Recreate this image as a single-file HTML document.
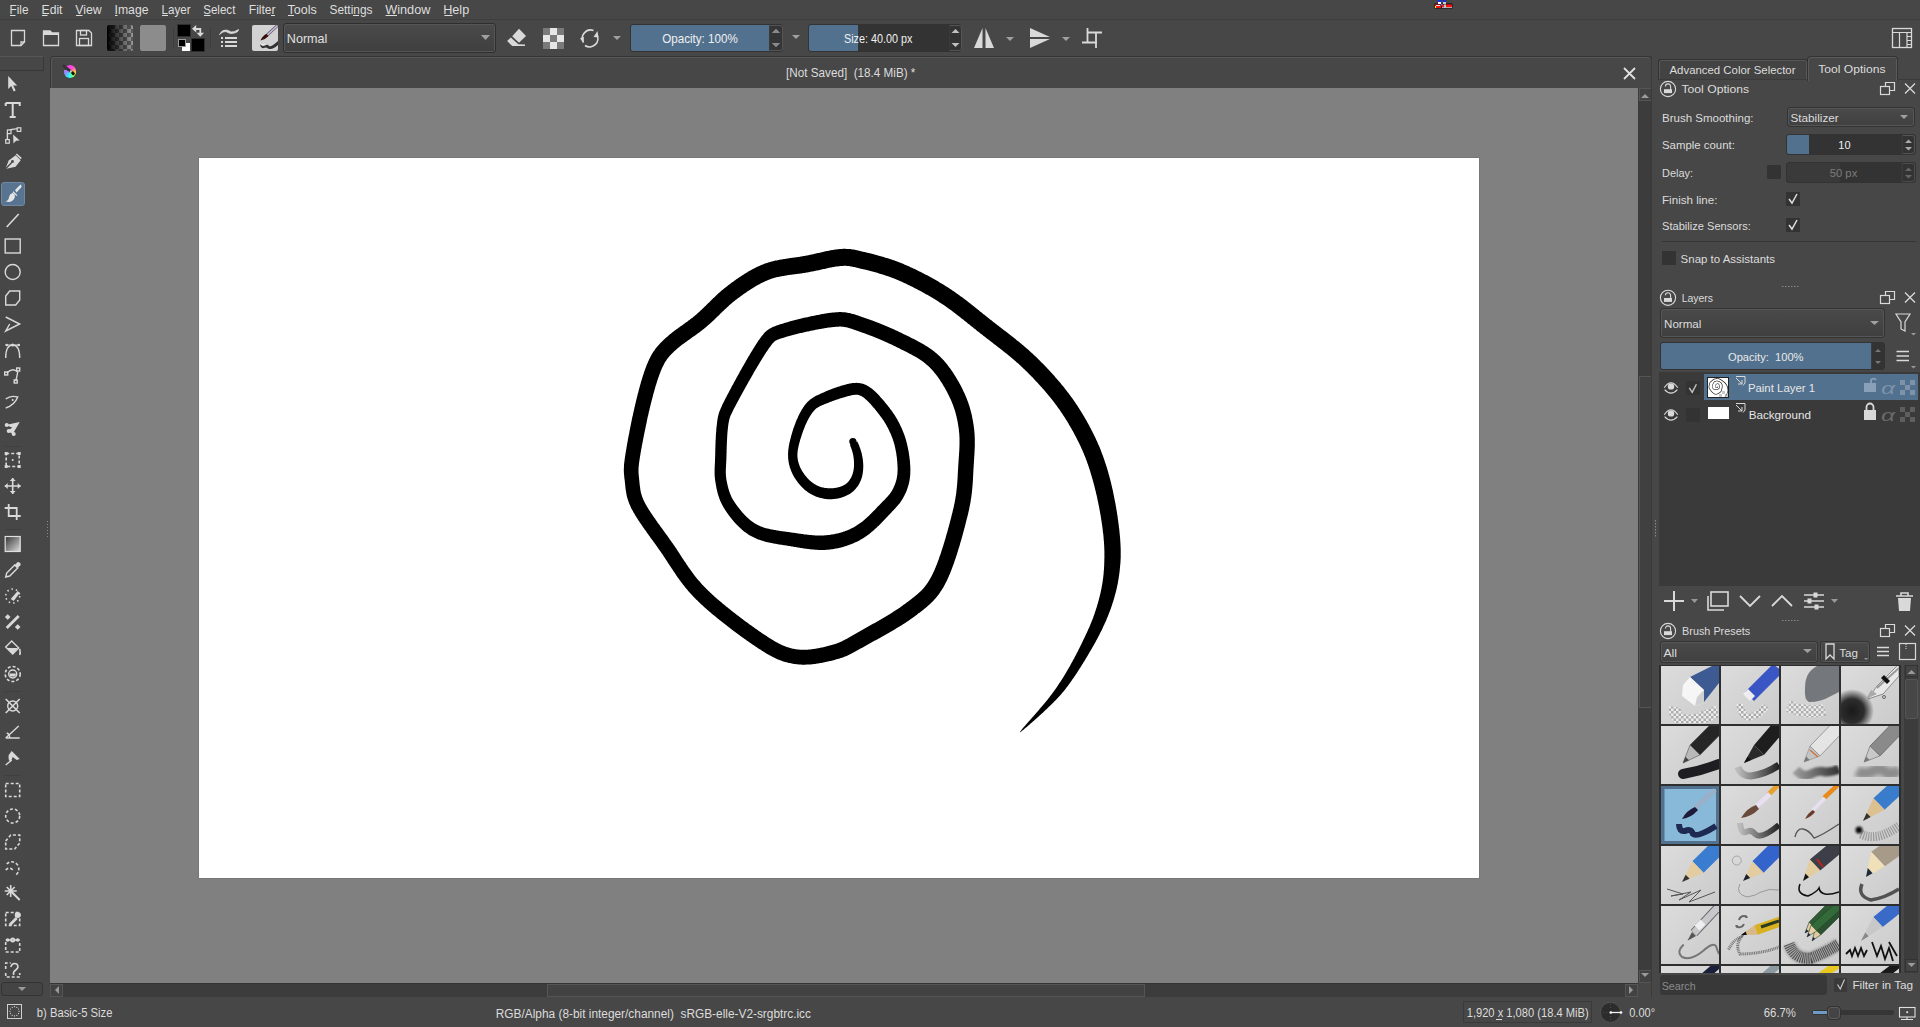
<!DOCTYPE html><html><head><meta charset="utf-8"><style>
*{box-sizing:border-box;margin:0;padding:0}
html,body{width:1920px;height:1027px;overflow:hidden;background:#474747;font-family:"Liberation Sans",sans-serif;font-size:12px;color:#dcdcdc}
.a{position:absolute}
.t{position:absolute;white-space:pre;line-height:14px}
svg{position:absolute;overflow:visible}
</style></head><body>

<div class="a" style="left:0;top:19px;width:1920px;height:1px;background:#3e3e3e"></div>
<svg style="left:0;top:0" width="1500" height="12"><rect x="1434.5" y="3.5" width="7" height="5" fill="#111"/><rect x="1441.5" y="3.5" width="11" height="5" fill="#111"/><rect x="1435" y="4.5" width="6" height="3.5" fill="#ff1010"/><rect x="1436" y="5" width="4" height="1" fill="#dde"/><rect x="1435" y="6" width="1" height="2" fill="#ff0"/><rect x="1442" y="4.5" width="10" height="3.2" fill="#ff1010"/><rect x="1444" y="4.5" width="2" height="3.2" fill="#bcc"/><rect x="1442" y="7" width="10" height="0.8" fill="#bcc"/><rect x="1438" y="2" width="3" height="2" fill="#fff"/><rect x="1443" y="2" width="3" height="2" fill="#ccc"/><rect x="1437.5" y="0" width="4" height="2" fill="#1030e0"/><rect x="1443" y="0" width="3" height="2" fill="#1030d0"/><rect x="1441" y="4" width="1.5" height="1.5" fill="#20a0ff"/></svg>
<svg style="left:0;top:0" width="300" height="60"><path d="M11.5,30.5 H24.5 V42 L21,45.5 H11.5 Z" fill="none" stroke="#d9d9d9" stroke-width="1.3"/><path d="M21,45.5 V42 H24.5" fill="none" stroke="#d9d9d9" stroke-width="1.3"/><path d="M43.5,31 H50 L52,33 H58.5 V45.5 H43.5 Z" fill="none" stroke="#d9d9d9" stroke-width="1.3"/><path d="M43.5,31 H50 L52,33 H58.5 V35 H43.5Z" fill="#d9d9d9"/><path d="M76.5,30.5 H89 L91.5,33 V45.5 H76.5 Z" fill="none" stroke="#d9d9d9" stroke-width="1.3"/><rect x="80.5" y="30.5" width="6" height="4.5" fill="none" stroke="#d9d9d9" stroke-width="1.3"/><rect x="79.5" y="38.5" width="9" height="7" fill="none" stroke="#d9d9d9" stroke-width="1.3"/></svg>
<div class="a" style="left:107px;top:25px;width:26px;height:26px;border-radius:2px;overflow:hidden;background:linear-gradient(90deg,#000 0%,rgba(0,0,0,0.0) 100%),repeating-conic-gradient(#5a5a5a 0 25%,#9a9a9a 0 50%) 0 0/8px 8px"></div>
<div class="a" style="left:140px;top:25px;width:26px;height:26px;border-radius:2px;background:#8c8c8c"></div>
<div class="a" style="left:173px;top:28px;width:1px;height:20px;background:#3d3d3d"></div>
<div class="a" style="left:177px;top:24px;width:14px;height:13px;background:#000;border:1px solid #2e2e2e"></div>
<div class="a" style="left:191px;top:38px;width:14px;height:14px;background:#000;border:1px solid #2e2e2e"></div>
<div class="a" style="left:182px;top:43px;width:8px;height:8px;background:#fff"></div>
<div class="a" style="left:178px;top:39px;width:8px;height:8px;background:#000;border:1px solid #9a9a9a"></div>
<svg style="left:0;top:0" width="300" height="60"><path d="M195,29 H200.3 V33.5" stroke="#d9d9d9" stroke-width="1.8" fill="none"/><path d="M192,28.7 L196.2,25 L196.2,32.4Z M200.3,36.8 L196.5,32.8 L204.1,32.8Z" fill="#d9d9d9"/></svg>
<div class="a" style="left:210px;top:28px;width:1px;height:20px;background:#3d3d3d"></div>
<svg style="left:0;top:0" width="300" height="60"><path d="M219.5,34.5 Q222,29.5 226,30 Q229,30.5 231,32 Q234,32.5 238.5,29.5 Q238.5,33 231,33.5 Q228,33 226,31.5 Q223,31 219.5,34.5Z" fill="#d9d9d9" stroke="#d9d9d9" stroke-width="0.8"/><rect x="221" y="37" width="2" height="2" fill="#d9d9d9"/><rect x="225" y="37" width="12" height="2" fill="#d9d9d9"/><rect x="221" y="41" width="2" height="2" fill="#d9d9d9"/><rect x="225" y="41" width="12" height="2" fill="#d9d9d9"/><rect x="221" y="45" width="2" height="2" fill="#d9d9d9"/><rect x="225" y="45" width="12" height="2" fill="#d9d9d9"/></svg>
<div class="a" style="left:252px;top:25px;width:26px;height:26px;border-radius:2px;background:#d2d2d2;overflow:hidden"><svg style="left:0;top:0" width="26" height="26"><path d="M8,18.5 Q9.5,22 13,20.5 Q16,19 17,21 Q19,22.5 26,16 L26,20 Q20,25.5 16,23.5 Q14,22 12,23 Q8.5,24 8,18.5Z" fill="#333"/><path d="M8,18.5 Q10,21 13,19.5" stroke="#fff" stroke-width="0.8" fill="none"/><path d="M13.5,11.5 L25.5,0.5" stroke="#555" stroke-width="3"/><path d="M13.5,11.5 L25.5,0.5" stroke="#c8b8e0" stroke-width="1.6"/><path d="M8.5,15.5 Q10.5,10.5 14.5,9 L16.5,11 Q13.5,14.5 8.5,15.5Z" fill="#3a0c0c"/></svg></div>
<div class="a" style="left:283px;top:23px;width:213px;height:30px;border:1px solid #2f2f2f;border-radius:3px;background:linear-gradient(#4a4a4a,#3f3f3f);box-shadow:inset 0 0 0 1px #565656"></div>
<svg style="left:0;top:0" width="700" height="60"><path d="M481,35 L490,35 L485.5,40Z" fill="#a0a0a0"/></svg>
<svg style="left:0;top:0" width="700" height="60"><path d="M512.2,36.2 L519,28.8 L526,35.9 L519,42.7Z" fill="#d9d9d9"/><path d="M507.1,41 L510.8,37.6 L518.3,44.3 L525,44.6 L525,46 L512.2,46Z" fill="#d9d9d9"/><rect x="543" y="28" width="21" height="21" fill="#7a7a7a"/><rect x="550" y="28" width="7" height="7" fill="#e6e6e6"/><rect x="543" y="35" width="7" height="7" fill="#e6e6e6"/><rect x="557" y="35" width="7" height="7" fill="#e6e6e6"/><rect x="550" y="42" width="7" height="7" fill="#e6e6e6"/><path d="M583.5,42.5 A8.3,8.3 0 0 1 593.5,30.5" stroke="#d9d9d9" stroke-width="1.7" fill="none"/><path d="M596.5,34 A8.3,8.3 0 0 1 585,45.5" stroke="#d9d9d9" stroke-width="1.7" fill="none"/><path d="M593.5,37 L597.5,31 L598.5,37.5Z M580,38.5 L583.5,42.5 L584,37Z" fill="#d9d9d9"/><path d="M613,36 L621,36 L617,40Z" fill="#a0a0a0"/></svg>
<div class="a" style="left:630px;top:24px;width:153px;height:28px;border:1px solid #333;border-radius:3px;background:#353535;overflow:hidden"><div class="a" style="left:0;top:0;width:139px;height:26px;background:#52718e"></div></div>
<svg style="left:0;top:0" width="1000" height="60"><path d="M772,33 L780,33 L776,29Z M772,43 L780,43 L776,47Z" fill="#8a8a8a"/><path d="M792,35 L800,35 L796,39Z" fill="#a0a0a0"/><path d="M952,33 L960,33 L956,29Z M952,43 L960,43 L956,47Z" fill="#c0c0c0"/></svg>
<div class="a" style="left:808px;top:24px;width:154px;height:28px;border:1px solid #333;border-radius:3px;background:#333;overflow:hidden"><div class="a" style="left:0;top:0;width:49px;height:26px;background:#52718e"></div></div>
<div class="a" style="left:769px;top:25px;width:14px;height:26px;border:1px solid #545454;border-left-color:#3a3a3a;border-radius:0 3px 3px 0"></div>
<div class="a" style="left:949px;top:25px;width:13px;height:26px;border:1px solid #545454;border-left-color:#3a3a3a;border-radius:0 3px 3px 0"></div>
<svg style="left:0;top:0" width="1000" height="60"><path d="M951.5,33 L959.5,33 L955.5,29Z M951.5,43 L959.5,43 L955.5,47Z" fill="#c0c0c0"/><path d="M772,33 L780,33 L776,29Z M772,43 L780,43 L776,47Z" fill="#8a8a8a"/></svg>
<svg style="left:0;top:0" width="1200" height="60"><path d="M982.5,28 L974,48 L982.5,48Z M985.5,28 L994,48 L985.5,48Z" fill="#d9d9d9"/><path d="M1006,37 L1014,37 L1010,41Z M1062,37 L1070,37 L1066,41Z" fill="#a0a0a0"/><path d="M1030,28 L1050,37 L1030,37Z M1030,39 L1050,39 L1030,48Z" fill="#d9d9d9"/><path d="M1087.5,28 V43.5 M1082,42.5 H1097 M1087.5,32.5 H1102 M1096,32.5 V48" stroke="#d9d9d9" stroke-width="1.8" fill="none"/><rect x="1892.5" y="28.5" width="19" height="19" fill="none" stroke="#d9d9d9" stroke-width="1.3"/><path d="M1892,32.5 H1912 M1899.5,32 V48 M1907,36.5 H1912 M1907,40.5 H1912 M1907,44.5 H1912 M1907,32 V48" stroke="#d9d9d9" stroke-width="1.2"/></svg>
<div class="a" style="left:0;top:56px;width:44px;height:15px;background:#474747;border-top:1px solid #565656;border-right:1px solid #383838;border-bottom:1px solid #383838"></div>
<div class="a" style="left:1px;top:182px;width:24px;height:24px;background:#587491;border:1px solid #6d89a5;border-radius:3px"></div>
<svg style="left:0;top:0" width="48" height="1000">
<g transform="translate(12.7,84)"><path d="M-4.5,-8 L-4.5,5 L-1.5,2 L1,7.5 L3,6.5 L0.5,1.5 L4.5,1.5Z" fill="#d9d9d9"/></g>
<g transform="translate(12.7,110)"><path d="M-7,-7 H7 V-4 M-7,-7 V-4 M0,-7 V7 M-3,7 H3" stroke="#d9d9d9" stroke-width="2" fill="none"/></g>
<g transform="translate(12.7,136)"><path d="M-5.3,4.6 V-2 Q-5.3,-5.5 -1,-6.5 Q2,-7.5 6,-7" stroke="#d9d9d9" stroke-width="1.4" fill="none"/><rect x="-7" y="3.6" width="3.6" height="3.6" fill="#474747" stroke="#d9d9d9" stroke-width="1.2"/><rect x="-5.3" y="-6" width="3.6" height="3.6" fill="#474747" stroke="#d9d9d9" stroke-width="1.2"/><rect x="4.5" y="-8.2" width="3.6" height="3.6" fill="#474747" stroke="#d9d9d9" stroke-width="1.2"/><path d="M0.4,-1.6 L7,4.6 L3.4,4.8 L0.8,7.6Z" fill="#d9d9d9"/></g>
<g transform="translate(12.7,162)"><path d="M-7.3,7 L-4,-1.5 L3,-6.8 L8,-1.8 L2.8,4.8Z" fill="#d9d9d9"/><path d="M-7.3,7 L-0.5,0" stroke="#474747" stroke-width="1.3"/><circle cx="-0.2" cy="-0.5" r="1.4" fill="#474747"/><path d="M3.6,-8 L8.6,-3.4" stroke="#d9d9d9" stroke-width="1.6"/></g>
<g transform="translate(12.7,193)"><path d="M2.3,-3 L7.8,-8.6 Q9.6,-7.6 8.6,-5.8 L3.8,-0.6Z" fill="#e6e6e6"/><path d="M0.3,-1.3 L4.3,2.6" stroke="#e6e6e6" stroke-width="1.3"/><path d="M1.8,1 Q3.3,5 -0.7,8 Q-3.7,9.6 -7.2,8.3 Q-3.7,7.4 -3.7,4 Q-2.7,0.6 -0.2,0Z" fill="#e6e6e6"/></g>
<g transform="translate(12.7,220)"><path d="M-6,7 L6,-6" stroke="#d9d9d9" stroke-width="1.6"/></g>
<g transform="translate(12.7,246)"><rect x="-7.5" y="-7" width="15" height="14" stroke="#d9d9d9" stroke-width="1.4" fill="none"/></g>
<g transform="translate(12.7,272)"><circle cx="0" cy="0" r="7.5" stroke="#d9d9d9" stroke-width="1.4" fill="none"/></g>
<g transform="translate(12.7,298)"><path d="M-7,-2 L-3,-7 H7 V2 L3,7 H-7Z" stroke="#d9d9d9" stroke-width="1.4" fill="none"/></g>
<g transform="translate(12.7,324)"><path d="M-7,-7 L7,0 L-7,7 L-3,0" stroke="#d9d9d9" stroke-width="1.4" fill="none"/></g>
<g transform="translate(12.7,351)"><path d="M-7,7 Q-7,-6 0,-6 Q7,-6 7,7" stroke="#d9d9d9" stroke-width="1.4" fill="none"/><path d="M-7,-6 H7" stroke="#d9d9d9" stroke-width="1"/><circle cx="0" cy="-6" r="1.5" fill="#d9d9d9"/><circle cx="-6" cy="-6" r="1.3" fill="#d9d9d9"/><circle cx="6" cy="-6" r="1.3" fill="#d9d9d9"/></g>
<g transform="translate(12.7,376)"><path d="M-6,-3 Q0,-9 5,-4 Q4,2 3,5" stroke="#d9d9d9" stroke-width="1.4" fill="none"/><rect x="-8" y="-4" width="3" height="3" stroke="#d9d9d9" stroke-width="1.4" fill="none"/><rect x="1.5" y="4" width="3" height="3" stroke="#d9d9d9" stroke-width="1.4" fill="none"/><rect x="4" y="-8" width="3" height="3" stroke="#d9d9d9" stroke-width="1.4" fill="none"/></g>
<g transform="translate(12.7,402)"><path d="M-7,-3 Q-2,-7 5,-5 Q2,3 -7,6" stroke="#d9d9d9" stroke-width="1.4" fill="none"/><circle cx="0" cy="-2" r="1" fill="#d9d9d9"/></g>
<g transform="translate(12.7,429)"><path d="M-7,-4 L7,-7 L3,0Z M-5,2 L7,-7 L0,5Z" fill="#d9d9d9"/><circle cx="-6" cy="-4" r="2" fill="#d9d9d9"/><circle cx="-4" cy="2" r="2" fill="#d9d9d9"/><circle cx="1" cy="5" r="2" fill="#d9d9d9"/></g>
<g transform="translate(12.7,460)"><rect x="-6.5" y="-6.5" width="13" height="13" stroke="#d9d9d9" stroke-width="1.6" fill="none" stroke-dasharray="3,2"/><circle cx="0" cy="0" r="1" fill="#d9d9d9"/><rect x="-8" y="-8" width="3" height="3" fill="#d9d9d9"/><rect x="5" y="-8" width="3" height="3" fill="#d9d9d9"/><rect x="-8" y="5" width="3" height="3" fill="#d9d9d9"/><rect x="5" y="5" width="3" height="3" fill="#d9d9d9"/></g>
<g transform="translate(12.7,486)"><path d="M-8,0 H8 M0,-8 V8" stroke="#d9d9d9" stroke-width="1.6"/><path d="M-8,0 L-5,-3 V3Z M8,0 L5,-3 V3Z M0,-8 L-3,-5 H3Z M0,8 L-3,5 H3Z" fill="#d9d9d9"/></g>
<g transform="translate(12.7,512)"><path d="M-4,-8 V4 H8 M-8,-4 H4 V8" stroke="#d9d9d9" stroke-width="1.8" fill="none"/></g>
<g transform="translate(12.7,544)"><defs><linearGradient id="gg" x1="0" x2="1" y1="0" y2="1"><stop offset="0" stop-color="#333"/><stop offset="1" stop-color="#ddd"/></linearGradient></defs><rect x="-7.5" y="-7.5" width="15" height="15" fill="url(#gg)" stroke="#e0e0e0" stroke-width="1.2"/></g>
<g transform="translate(12.7,570)"><path d="M-7,7 L-6,3 L2,-5 L5,-2 L-3,6Z" stroke="#d9d9d9" stroke-width="1.4" fill="none"/><path d="M2,-5 L5,-8 Q8,-8 8,-5 L5,-2Z" fill="#d9d9d9"/></g>
<g transform="translate(12.7,596)"><path d="M-2,3 L5,-5 L7,-3 L1,5Z" fill="#d9d9d9"/><circle cx="0" cy="0" r="7" stroke="#d9d9d9" stroke-width="1.6" fill="none" stroke-dasharray="1.5,3"/></g>
<g transform="translate(12.7,622)"><path d="M-7,5 L5,-7 L7,-5 L-5,7Z" fill="#d9d9d9"/><rect x="-7" y="-7" width="4" height="4" transform="rotate(45 -5 -5)" fill="#d9d9d9"/><rect x="3" y="3" width="4" height="4" transform="rotate(45 5 5)" fill="#d9d9d9"/></g>
<g transform="translate(12.7,648)"><path d="M-7,-1 L-1,-7 L6,0 L0,6Z" stroke="#d9d9d9" stroke-width="1.4" fill="none"/><path d="M-6,0 H5 L0,6Z" fill="#d9d9d9"/><path d="M7,1 Q8,5 7,7" stroke="#d9d9d9" stroke-width="1.6"/></g>
<g transform="translate(12.7,674)"><circle cx="0" cy="0" r="7.5" stroke="#d9d9d9" stroke-width="1.6" fill="none" stroke-dasharray="3,2"/><circle cx="0" cy="0" r="4" stroke="#d9d9d9" stroke-width="1.4" fill="none"/><rect x="-3" y="-0.5" width="6" height="3" fill="#d9d9d9"/></g>
<g transform="translate(12.7,706)"><circle cx="0" cy="0" r="5" stroke="#d9d9d9" stroke-width="1.4" fill="none"/><path d="M-7,-7 L7,7 M7,-7 L-7,7" stroke="#d9d9d9" stroke-width="1.6"/></g>
<g transform="translate(12.7,732)"><path d="M-7,6 H7 M-7,6 L6,-6" stroke="#d9d9d9" stroke-width="1.4" fill="none"/><path d="M-3,6 Q-3,2 -6,1" stroke="#d9d9d9" stroke-width="1.4" fill="none"/></g>
<g transform="translate(12.7,758)"><path d="M-1,-7 L7,1 L4,2 L0,-1 L-2,4 Q-5,2 -4,-3Z" fill="#d9d9d9"/><path d="M-7,7 L-1,2" stroke="#d9d9d9" stroke-width="1.4"/></g>
<g transform="translate(12.7,790)"><rect x="-7" y="-6.5" width="14" height="13" stroke="#d9d9d9" stroke-width="1.6" fill="none" stroke-dasharray="3,2"/></g>
<g transform="translate(12.7,816)"><circle cx="0" cy="0" r="7" stroke="#d9d9d9" stroke-width="1.6" fill="none" stroke-dasharray="3,2"/></g>
<g transform="translate(12.7,842)"><path d="M-7,-1 L-2,-7 H7 V1 L2,7 H-7Z" stroke="#d9d9d9" stroke-width="1.6" fill="none" stroke-dasharray="3,2"/></g>
<g transform="translate(12.7,868)"><path d="M-6,-4 Q0,-9 5,-3 Q8,3 3,7 M-7,2 Q-3,-2 1,3" stroke="#d9d9d9" stroke-width="1.6" fill="none" stroke-dasharray="3,2"/></g>
<g transform="translate(12.7,893)"><path d="M-2,-2 L7,7" stroke="#d9d9d9" stroke-width="2"/><path d="M-2,-8 V4 M-8,-2 H4 M-6,-6 L2,2 M2,-6 L-6,2" stroke="#d9d9d9" stroke-width="1.6"/></g>
<g transform="translate(12.7,919)"><rect x="-7" y="-6.5" width="14" height="13" stroke="#d9d9d9" stroke-width="1.6" fill="none" stroke-dasharray="3,2"/><path d="M-4,5 L3,-2 L5,0 L-2,7Z" fill="#d9d9d9"/><circle cx="5" cy="-4" r="3" fill="#d9d9d9"/></g>
<g transform="translate(12.7,945)"><path d="M-7,-3 V7 H7 V-3" stroke="#d9d9d9" stroke-width="1.6" fill="none" stroke-dasharray="3,2"/><path d="M-7,-5 H7" stroke="#d9d9d9" stroke-width="1.6"/><circle cx="-5" cy="-5" r="1.8" fill="#d9d9d9"/><circle cx="5" cy="-5" r="1.8" fill="#d9d9d9"/><circle cx="0" cy="-5" r="1.8" stroke="#d9d9d9" stroke-width="1.4" fill="none"/></g>
<g transform="translate(12.7,970)"><path d="M-7,-1 V-7 H-2 M-7,3 V7 H7 V3" stroke="#d9d9d9" stroke-width="1.6" fill="none" stroke-dasharray="3,2"/><path d="M-2,-3 Q0,-8 4,-6 Q7,-3 3,0 Q0,2 1,5" stroke="#d9d9d9" stroke-width="1.6" fill="none"/></g>
<path d="M5,446.5 H21" stroke="#3f3f3f" stroke-width="1"/>
<path d="M5,529.5 H21" stroke="#3f3f3f" stroke-width="1"/>
<path d="M5,691.5 H21" stroke="#3f3f3f" stroke-width="1"/>
<path d="M5,775.5 H21" stroke="#3f3f3f" stroke-width="1"/>
</svg>
<svg style="left:0;top:0" width="60" height="1000"><path d="M47.5,521 V538" stroke="#8a8a8a" stroke-width="1" stroke-dasharray="1,2"/></svg>
<div class="a" style="left:1px;top:982px;width:42px;height:14px;border:1px solid #333;border-radius:3px;background:#444"></div>
<svg style="left:0;top:0" width="60" height="1000"><path d="M18,987 L26,987 L22,991Z" fill="#9a9a9a"/></svg>
<div class="a" style="left:50px;top:56px;width:1602px;height:33px;border:1px solid #353535;border-bottom:none;border-radius:4px 4px 0 0;background:#474747"></div>
<div class="a" style="left:51px;top:57px;width:1599px;height:31px;border-top:1px solid #575757;border-left:1px solid #575757;border-radius:3px 3px 0 0"></div>
<div class="a" style="left:63.5px;top:64.8px;width:12.8px;height:12.8px;border-radius:50%;background:conic-gradient(from -52deg,#ff30ff 0deg,#ff50d0 90deg,#ffa070 130deg,#ffff30 160deg,#70ff70 200deg,#20ffff 240deg,#70b0ff 280deg,#a080ff 320deg,#a080ff 338deg,#444 341deg,#444 356deg,#ff30ff 360deg)"></div>
<svg style="left:0;top:0" width="100" height="100"><path d="M63,65.2 L71,71.5" stroke="#333" stroke-width="2.6"/><path d="M70.3,70.8 L71.8,72" stroke="#ccc" stroke-width="2"/><ellipse cx="73" cy="73.2" rx="1.6" ry="2" transform="rotate(-40 73 73.2)" fill="#111"/></svg>
<svg style="left:0;top:0" width="1700" height="100"><path d="M1624,68 L1635,79 M1635,68 L1624,79" stroke="#e0e0e0" stroke-width="1.8"/></svg>
<div class="a" style="left:50px;top:88px;width:1588px;height:895px;background:#808080"></div>
<div class="a" style="left:199px;top:158px;width:1280px;height:720px;background:#fff;box-shadow:0 0 0 1px #777"></div>
<svg style="left:0;top:0" width="1920" height="1027"><path id="spir" d="M849.9,444.7 L850.1,445.2 L850.3,445.7 L850.5,446.4 L850.8,447.1 L851.1,447.9 L851.4,448.7 L851.7,449.5 L852.0,450.4 L852.2,451.2 L852.5,452.1 L852.7,453.0 L852.9,453.9 L853.1,454.8 L853.3,455.6 L853.4,456.5 L853.6,457.5 L853.7,458.4 L853.8,459.3 L853.9,460.2 L853.9,461.1 L854.0,462.0 L854.0,462.9 L854.0,463.8 L854.0,464.7 L854.0,465.6 L854.0,466.5 L853.9,467.4 L853.8,468.2 L853.7,469.1 L853.6,470.0 L853.4,470.8 L853.2,471.7 L853.0,472.5 L852.8,473.3 L852.6,474.1 L852.3,474.8 L852.0,475.6 L851.7,476.3 L851.4,477.0 L851.0,477.8 L850.6,478.5 L850.2,479.1 L849.7,479.8 L849.3,480.4 L848.8,481.1 L848.3,481.7 L847.8,482.2 L847.2,482.7 L846.7,483.3 L846.1,483.7 L845.5,484.2 L844.9,484.6 L844.3,485.0 L843.6,485.3 L842.9,485.7 L842.2,486.0 L841.5,486.3 L840.7,486.6 L839.9,486.9 L839.1,487.1 L838.3,487.3 L837.5,487.5 L836.7,487.7 L835.8,487.8 L835.0,488.0 L834.1,488.1 L833.3,488.2 L832.5,488.2 L831.6,488.3 L830.8,488.3 L829.9,488.3 L829.1,488.3 L828.3,488.3 L827.4,488.2 L826.6,488.1 L825.8,488.0 L824.9,487.9 L824.1,487.7 L823.3,487.6 L822.4,487.4 L821.6,487.2 L820.8,486.9 L820.0,486.7 L819.2,486.4 L818.5,486.1 L817.7,485.8 L816.9,485.4 L816.2,485.0 L815.5,484.6 L814.7,484.2 L814.0,483.8 L813.3,483.3 L812.6,482.8 L812.0,482.3 L811.3,481.8 L810.6,481.2 L810.0,480.7 L809.3,480.1 L808.7,479.4 L808.1,478.8 L807.5,478.2 L806.9,477.5 L806.3,476.8 L805.7,476.1 L805.2,475.4 L804.6,474.7 L804.1,474.0 L803.6,473.3 L803.1,472.5 L802.6,471.8 L802.1,471.0 L801.7,470.3 L801.3,469.5 L800.9,468.7 L800.5,467.9 L800.1,467.2 L799.8,466.4 L799.5,465.5 L799.2,464.7 L798.9,463.9 L798.6,463.1 L798.4,462.2 L798.2,461.4 L798.0,460.6 L797.8,459.7 L797.7,458.9 L797.6,458.0 L797.5,457.2 L797.4,456.3 L797.4,455.4 L797.4,454.6 L797.4,453.7 L797.5,452.8 L797.6,452.0 L797.7,451.1 L797.8,450.2 L797.9,449.3 L798.1,448.4 L798.3,447.5 L798.5,446.6 L798.7,445.7 L798.9,444.8 L799.1,443.8 L799.4,442.9 L799.6,442.0 L799.9,441.1 L800.1,440.1 L800.4,439.2 L800.7,438.3 L801.0,437.4 L801.3,436.4 L801.6,435.5 L801.9,434.6 L802.2,433.7 L802.5,432.8 L802.8,431.9 L803.1,431.0 L803.5,430.1 L803.8,429.2 L804.2,428.3 L804.5,427.4 L804.9,426.5 L805.2,425.6 L805.6,424.8 L806.0,423.9 L806.4,423.0 L806.8,422.2 L807.2,421.3 L807.6,420.5 L808.1,419.7 L808.5,418.8 L809.0,418.0 L809.4,417.2 L809.9,416.4 L810.3,415.7 L810.8,414.9 L811.3,414.2 L811.8,413.4 L812.3,412.7 L812.9,412.0 L813.4,411.4 L813.9,410.8 L814.5,410.2 L815.1,409.6 L815.6,409.1 L816.2,408.6 L816.8,408.1 L817.4,407.7 L818.1,407.3 L818.7,406.9 L819.4,406.5 L820.1,406.1 L820.9,405.8 L821.7,405.4 L822.6,405.1 L823.4,404.7 L824.3,404.3 L825.3,404.0 L826.2,403.6 L827.1,403.2 L828.0,402.9 L829.0,402.5 L829.9,402.1 L830.8,401.8 L831.7,401.4 L832.6,401.1 L833.5,400.8 L834.4,400.4 L835.3,400.1 L836.2,399.8 L837.1,399.5 L838.0,399.2 L838.9,398.9 L839.8,398.6 L840.8,398.3 L841.7,398.0 L842.6,397.7 L843.5,397.5 L844.5,397.2 L845.4,396.9 L846.3,396.6 L847.2,396.4 L848.1,396.1 L849.0,395.9 L849.9,395.7 L850.8,395.5 L851.7,395.3 L852.5,395.1 L853.3,395.0 L854.1,394.9 L854.9,394.8 L855.6,394.8 L856.3,394.8 L857.0,394.8 L857.6,394.8 L858.2,394.9 L858.8,395.1 L859.4,395.2 L859.9,395.4 L860.5,395.7 L861.1,396.0 L861.7,396.3 L862.3,396.7 L862.9,397.1 L863.6,397.6 L864.2,398.1 L864.9,398.6 L865.5,399.2 L866.2,399.7 L866.8,400.3 L867.5,401.0 L868.1,401.6 L868.8,402.3 L869.4,402.9 L870.1,403.6 L870.7,404.3 L871.3,405.0 L872.0,405.7 L872.6,406.4 L873.2,407.2 L873.9,407.9 L874.5,408.6 L875.1,409.4 L875.7,410.1 L876.3,410.9 L876.9,411.6 L877.5,412.4 L878.1,413.1 L878.7,413.9 L879.3,414.7 L879.9,415.4 L880.4,416.2 L881.0,417.0 L881.6,417.7 L882.1,418.5 L882.6,419.3 L883.2,420.0 L883.7,420.8 L884.2,421.6 L884.7,422.4 L885.2,423.2 L885.7,424.0 L886.1,424.8 L886.6,425.6 L887.0,426.4 L887.5,427.2 L887.9,428.0 L888.3,428.8 L888.7,429.7 L889.1,430.5 L889.5,431.4 L889.9,432.2 L890.3,433.1 L890.7,433.9 L891.1,434.8 L891.4,435.7 L891.7,436.5 L892.1,437.4 L892.4,438.3 L892.7,439.1 L893.0,440.0 L893.3,440.9 L893.6,441.8 L893.9,442.7 L894.1,443.5 L894.4,444.4 L894.6,445.3 L894.8,446.2 L895.0,447.1 L895.2,448.0 L895.4,448.9 L895.6,449.9 L895.8,450.8 L895.9,451.7 L896.1,452.6 L896.3,453.6 L896.4,454.5 L896.5,455.5 L896.7,456.4 L896.8,457.3 L896.9,458.3 L897.0,459.2 L897.1,460.2 L897.2,461.1 L897.3,462.1 L897.3,463.0 L897.4,463.9 L897.5,464.9 L897.5,465.8 L897.5,466.7 L897.6,467.7 L897.6,468.6 L897.6,469.5 L897.6,470.4 L897.5,471.3 L897.5,472.2 L897.4,473.0 L897.4,473.9 L897.3,474.8 L897.2,475.6 L897.0,476.5 L896.9,477.3 L896.7,478.2 L896.6,479.0 L896.4,479.8 L896.1,480.7 L895.9,481.5 L895.7,482.3 L895.4,483.1 L895.1,483.9 L894.8,484.7 L894.5,485.5 L894.1,486.3 L893.8,487.1 L893.4,487.9 L893.0,488.7 L892.6,489.5 L892.2,490.2 L891.8,490.9 L891.4,491.6 L890.9,492.3 L890.4,493.0 L890.0,493.7 L889.5,494.3 L888.9,495.0 L888.4,495.6 L887.8,496.3 L887.2,496.9 L886.6,497.6 L885.9,498.3 L885.3,499.0 L884.6,499.7 L883.9,500.4 L883.2,501.1 L882.5,501.8 L881.8,502.5 L881.1,503.2 L880.4,504.0 L879.7,504.7 L879.0,505.4 L878.3,506.1 L877.6,506.8 L876.9,507.6 L876.3,508.3 L875.6,509.0 L874.9,509.7 L874.2,510.4 L873.5,511.1 L872.8,511.8 L872.1,512.5 L871.4,513.2 L870.8,513.8 L870.1,514.5 L869.4,515.2 L868.7,515.9 L868.0,516.5 L867.3,517.2 L866.6,517.8 L865.9,518.4 L865.2,519.1 L864.5,519.7 L863.8,520.3 L863.1,520.9 L862.4,521.4 L861.7,522.0 L861.0,522.6 L860.2,523.1 L859.5,523.6 L858.8,524.1 L858.1,524.6 L857.3,525.1 L856.6,525.6 L855.8,526.1 L855.1,526.5 L854.3,527.0 L853.5,527.4 L852.7,527.8 L851.9,528.2 L851.1,528.6 L850.3,529.0 L849.5,529.4 L848.7,529.7 L847.9,530.1 L847.0,530.4 L846.2,530.7 L845.3,531.0 L844.5,531.4 L843.6,531.6 L842.8,531.9 L841.9,532.2 L841.1,532.5 L840.2,532.7 L839.3,533.0 L838.4,533.2 L837.6,533.4 L836.7,533.6 L835.8,533.8 L834.9,534.0 L834.0,534.2 L833.1,534.3 L832.2,534.5 L831.3,534.6 L830.4,534.8 L829.5,534.9 L828.6,535.0 L827.7,535.1 L826.8,535.2 L825.9,535.3 L825.0,535.3 L824.1,535.4 L823.2,535.5 L822.3,535.5 L821.4,535.5 L820.5,535.5 L819.6,535.5 L818.7,535.5 L817.8,535.5 L816.9,535.5 L815.9,535.4 L815.0,535.4 L814.1,535.3 L813.1,535.3 L812.2,535.2 L811.3,535.1 L810.3,535.0 L809.4,534.9 L808.4,534.8 L807.5,534.7 L806.5,534.6 L805.5,534.5 L804.6,534.4 L803.6,534.2 L802.6,534.1 L801.7,534.0 L800.7,533.8 L799.7,533.7 L798.7,533.6 L797.7,533.4 L796.8,533.3 L795.8,533.1 L794.8,533.0 L793.8,532.8 L792.8,532.7 L791.8,532.5 L790.8,532.4 L789.8,532.3 L788.8,532.1 L787.8,532.0 L786.8,531.8 L785.8,531.7 L784.8,531.6 L783.8,531.4 L782.8,531.3 L781.9,531.2 L780.9,531.0 L779.9,530.9 L779.0,530.7 L778.0,530.6 L777.0,530.4 L776.1,530.3 L775.2,530.1 L774.2,530.0 L773.3,529.8 L772.3,529.6 L771.4,529.4 L770.5,529.2 L769.6,529.0 L768.7,528.8 L767.8,528.6 L766.9,528.4 L766.0,528.2 L765.2,527.9 L764.3,527.7 L763.5,527.4 L762.6,527.1 L761.8,526.8 L761.0,526.5 L760.2,526.2 L759.4,525.8 L758.7,525.5 L757.9,525.1 L757.1,524.7 L756.4,524.3 L755.7,523.9 L754.9,523.5 L754.2,523.0 L753.5,522.5 L752.8,522.0 L752.1,521.5 L751.4,521.0 L750.7,520.4 L750.0,519.9 L749.3,519.3 L748.6,518.7 L748.0,518.1 L747.3,517.5 L746.6,516.9 L746.0,516.2 L745.3,515.6 L744.7,514.9 L744.1,514.2 L743.4,513.6 L742.8,512.9 L742.2,512.2 L741.6,511.5 L741.0,510.8 L740.4,510.0 L739.8,509.3 L739.2,508.6 L738.6,507.8 L738.0,507.1 L737.4,506.3 L736.9,505.6 L736.3,504.8 L735.8,504.1 L735.3,503.3 L734.8,502.6 L734.3,501.8 L733.8,501.0 L733.3,500.3 L732.9,499.5 L732.4,498.8 L732.0,498.0 L731.6,497.2 L731.3,496.4 L730.9,495.6 L730.6,494.8 L730.2,494.0 L729.9,493.2 L729.6,492.3 L729.3,491.5 L729.0,490.6 L728.8,489.8 L728.5,488.9 L728.3,488.0 L728.0,487.1 L727.8,486.2 L727.6,485.3 L727.4,484.3 L727.2,483.4 L727.0,482.5 L726.8,481.6 L726.6,480.6 L726.4,479.7 L726.3,478.8 L726.2,477.9 L726.1,477.0 L726.0,476.1 L725.9,475.2 L725.9,474.3 L725.8,473.5 L725.8,472.6 L725.8,471.7 L725.8,470.7 L725.8,469.8 L725.9,468.9 L725.9,467.9 L726.0,466.9 L726.0,465.9 L726.1,465.0 L726.1,463.9 L726.2,462.9 L726.2,461.9 L726.3,460.9 L726.3,459.9 L726.4,458.9 L726.4,457.9 L726.4,456.8 L726.5,455.8 L726.5,454.8 L726.5,453.8 L726.6,452.8 L726.6,451.8 L726.6,450.8 L726.6,449.8 L726.7,448.8 L726.7,447.8 L726.7,446.8 L726.8,445.9 L726.8,444.9 L726.8,443.9 L726.9,442.9 L726.9,441.9 L727.0,440.9 L727.0,439.9 L727.1,439.0 L727.1,438.0 L727.2,437.0 L727.2,436.0 L727.3,435.1 L727.4,434.1 L727.4,433.1 L727.5,432.2 L727.6,431.2 L727.7,430.2 L727.8,429.3 L727.9,428.3 L728.0,427.4 L728.1,426.4 L728.2,425.4 L728.4,424.5 L728.5,423.6 L728.7,422.6 L728.8,421.7 L729.0,420.9 L729.2,420.0 L729.4,419.2 L729.6,418.4 L729.9,417.6 L730.1,416.9 L730.4,416.1 L730.8,415.3 L731.1,414.5 L731.5,413.7 L731.9,412.9 L732.3,412.1 L732.7,411.2 L733.1,410.4 L733.5,409.5 L734.0,408.6 L734.4,407.8 L734.9,406.9 L735.4,406.0 L735.8,405.2 L736.3,404.3 L736.7,403.4 L737.2,402.5 L737.7,401.7 L738.2,400.8 L738.6,399.9 L739.1,399.0 L739.6,398.2 L740.0,397.3 L740.5,396.4 L741.0,395.5 L741.5,394.7 L741.9,393.8 L742.4,392.9 L742.9,392.1 L743.4,391.2 L743.9,390.3 L744.4,389.5 L744.8,388.6 L745.3,387.7 L745.8,386.8 L746.3,386.0 L746.8,385.1 L747.3,384.2 L747.7,383.4 L748.2,382.5 L748.7,381.6 L749.2,380.8 L749.7,379.9 L750.2,379.0 L750.7,378.2 L751.2,377.3 L751.7,376.5 L752.2,375.6 L752.7,374.7 L753.1,373.9 L753.6,373.0 L754.1,372.1 L754.6,371.3 L755.1,370.4 L755.6,369.6 L756.1,368.7 L756.6,367.9 L757.1,367.0 L757.6,366.2 L758.2,365.3 L758.7,364.5 L759.2,363.6 L759.7,362.8 L760.2,361.9 L760.7,361.1 L761.2,360.2 L761.7,359.4 L762.2,358.6 L762.8,357.7 L763.3,356.9 L763.8,356.1 L764.3,355.2 L764.8,354.4 L765.4,353.6 L765.9,352.8 L766.4,352.0 L767.0,351.2 L767.5,350.4 L768.1,349.6 L768.6,348.8 L769.2,348.0 L769.7,347.2 L770.3,346.5 L770.8,345.7 L771.4,345.0 L771.9,344.3 L772.5,343.6 L773.0,343.0 L773.5,342.4 L774.0,341.9 L774.5,341.5 L775.0,341.1 L775.5,340.8 L776.0,340.5 L776.5,340.2 L777.1,339.9 L777.7,339.6 L778.4,339.4 L779.2,339.1 L780.0,338.8 L780.8,338.5 L781.7,338.3 L782.6,338.0 L783.6,337.7 L784.5,337.4 L785.5,337.1 L786.4,336.8 L787.3,336.6 L788.3,336.3 L789.2,336.0 L790.1,335.8 L791.1,335.5 L792.0,335.3 L792.9,335.0 L793.9,334.8 L794.8,334.5 L795.8,334.3 L796.7,334.0 L797.6,333.8 L798.6,333.6 L799.5,333.3 L800.5,333.1 L801.5,332.9 L802.4,332.7 L803.4,332.4 L804.3,332.2 L805.3,332.0 L806.2,331.8 L807.2,331.6 L808.2,331.4 L809.1,331.2 L810.1,331.0 L811.0,330.8 L812.0,330.6 L813.0,330.4 L813.9,330.2 L814.9,330.0 L815.9,329.8 L816.8,329.6 L817.8,329.4 L818.7,329.2 L819.7,329.1 L820.7,328.9 L821.6,328.7 L822.6,328.6 L823.6,328.4 L824.5,328.2 L825.5,328.1 L826.4,327.9 L827.4,327.8 L828.3,327.6 L829.3,327.5 L830.2,327.4 L831.2,327.3 L832.1,327.2 L833.0,327.1 L833.9,327.0 L834.9,326.9 L835.8,326.8 L836.7,326.7 L837.6,326.7 L838.4,326.7 L839.3,326.6 L840.2,326.6 L841.0,326.6 L841.8,326.7 L842.6,326.7 L843.4,326.8 L844.2,326.9 L844.9,327.0 L845.7,327.2 L846.5,327.3 L847.3,327.5 L848.1,327.7 L848.9,328.0 L849.7,328.2 L850.6,328.5 L851.5,328.8 L852.4,329.1 L853.3,329.4 L854.3,329.8 L855.2,330.1 L856.2,330.4 L857.1,330.7 L858.0,331.1 L859.0,331.4 L859.9,331.7 L860.9,332.0 L861.8,332.4 L862.7,332.7 L863.6,333.0 L864.5,333.3 L865.5,333.7 L866.4,334.0 L867.3,334.4 L868.2,334.7 L869.1,335.0 L870.0,335.4 L870.9,335.8 L871.8,336.1 L872.8,336.5 L873.7,336.8 L874.6,337.2 L875.5,337.6 L876.4,337.9 L877.3,338.3 L878.2,338.7 L879.1,339.1 L880.0,339.4 L880.9,339.8 L881.8,340.2 L882.7,340.6 L883.6,341.0 L884.5,341.4 L885.4,341.8 L886.3,342.2 L887.1,342.6 L888.0,343.0 L888.9,343.4 L889.8,343.8 L890.7,344.2 L891.6,344.6 L892.4,345.1 L893.3,345.5 L894.2,345.9 L895.1,346.3 L896.0,346.8 L896.9,347.2 L897.8,347.7 L898.7,348.1 L899.5,348.5 L900.4,349.0 L901.3,349.4 L902.2,349.9 L903.1,350.3 L904.0,350.7 L904.9,351.2 L905.7,351.6 L906.6,352.1 L907.5,352.5 L908.4,353.0 L909.2,353.4 L910.1,353.9 L910.9,354.3 L911.8,354.8 L912.6,355.2 L913.4,355.7 L914.3,356.2 L915.1,356.6 L915.9,357.1 L916.7,357.6 L917.5,358.1 L918.3,358.6 L919.1,359.0 L919.8,359.5 L920.6,360.1 L921.3,360.6 L922.1,361.1 L922.8,361.6 L923.5,362.1 L924.3,362.7 L925.0,363.2 L925.6,363.8 L926.3,364.4 L927.0,364.9 L927.7,365.5 L928.3,366.1 L929.0,366.7 L929.6,367.3 L930.2,368.0 L930.8,368.6 L931.5,369.2 L932.1,369.9 L932.7,370.6 L933.3,371.3 L933.9,372.0 L934.4,372.7 L935.0,373.4 L935.6,374.1 L936.1,374.8 L936.7,375.5 L937.3,376.3 L937.8,377.0 L938.3,377.8 L938.9,378.6 L939.4,379.3 L939.9,380.1 L940.4,380.9 L941.0,381.7 L941.5,382.5 L942.0,383.3 L942.5,384.1 L943.0,384.9 L943.4,385.7 L943.9,386.5 L944.4,387.3 L944.9,388.1 L945.3,389.0 L945.8,389.8 L946.3,390.6 L946.7,391.5 L947.2,392.3 L947.6,393.2 L948.0,394.0 L948.5,394.9 L948.9,395.7 L949.3,396.6 L949.7,397.4 L950.1,398.3 L950.5,399.1 L950.9,400.0 L951.3,400.8 L951.6,401.7 L952.0,402.5 L952.3,403.4 L952.7,404.2 L953.0,405.1 L953.3,406.0 L953.6,406.8 L953.9,407.7 L954.2,408.6 L954.5,409.4 L954.8,410.3 L955.1,411.2 L955.3,412.1 L955.6,413.0 L955.8,413.9 L956.1,414.8 L956.3,415.7 L956.5,416.6 L956.7,417.5 L956.9,418.4 L957.1,419.3 L957.3,420.2 L957.5,421.2 L957.7,422.1 L957.8,423.0 L958.0,423.9 L958.1,424.9 L958.3,425.8 L958.4,426.7 L958.6,427.7 L958.7,428.6 L958.8,429.5 L958.9,430.4 L959.0,431.4 L959.1,432.3 L959.2,433.2 L959.3,434.1 L959.3,435.1 L959.4,436.0 L959.4,436.9 L959.5,437.8 L959.5,438.8 L959.5,439.7 L959.5,440.6 L959.5,441.6 L959.5,442.5 L959.5,443.4 L959.5,444.4 L959.5,445.3 L959.4,446.3 L959.4,447.3 L959.4,448.2 L959.3,449.2 L959.3,450.2 L959.2,451.1 L959.2,452.1 L959.1,453.1 L959.0,454.1 L959.0,455.0 L958.9,456.0 L958.8,457.0 L958.8,458.0 L958.7,459.0 L958.6,460.0 L958.6,461.0 L958.5,462.0 L958.4,463.0 L958.4,464.0 L958.3,465.0 L958.2,466.0 L958.2,467.0 L958.1,468.1 L958.1,469.1 L958.0,470.1 L957.9,471.1 L957.9,472.1 L957.8,473.1 L957.8,474.1 L957.7,475.1 L957.7,476.1 L957.6,477.1 L957.6,478.0 L957.5,479.0 L957.4,480.0 L957.4,481.0 L957.3,481.9 L957.2,482.9 L957.2,483.9 L957.1,484.8 L957.0,485.8 L956.9,486.7 L956.8,487.7 L956.7,488.7 L956.6,489.6 L956.5,490.5 L956.4,491.5 L956.3,492.4 L956.2,493.4 L956.0,494.3 L955.9,495.3 L955.7,496.2 L955.6,497.1 L955.4,498.1 L955.3,499.0 L955.1,500.0 L954.9,500.9 L954.8,501.8 L954.6,502.8 L954.4,503.7 L954.2,504.6 L954.0,505.6 L953.8,506.5 L953.6,507.5 L953.4,508.4 L953.1,509.3 L952.9,510.3 L952.7,511.2 L952.5,512.2 L952.2,513.2 L952.0,514.1 L951.7,515.1 L951.5,516.0 L951.3,517.0 L951.0,517.9 L950.8,518.9 L950.5,519.8 L950.3,520.8 L950.0,521.8 L949.8,522.7 L949.5,523.7 L949.3,524.6 L949.0,525.6 L948.8,526.5 L948.5,527.5 L948.2,528.4 L948.0,529.4 L947.7,530.3 L947.5,531.3 L947.2,532.2 L946.9,533.2 L946.6,534.1 L946.4,535.1 L946.1,536.0 L945.8,537.0 L945.6,537.9 L945.3,538.9 L945.0,539.8 L944.7,540.8 L944.4,541.7 L944.2,542.6 L943.9,543.6 L943.6,544.5 L943.3,545.5 L943.0,546.4 L942.7,547.3 L942.4,548.3 L942.1,549.2 L941.8,550.1 L941.5,551.1 L941.2,552.0 L940.9,552.9 L940.6,553.9 L940.3,554.8 L939.9,555.7 L939.6,556.6 L939.3,557.5 L939.0,558.5 L938.7,559.4 L938.3,560.3 L938.0,561.2 L937.7,562.1 L937.3,563.0 L937.0,563.9 L936.6,564.8 L936.3,565.7 L935.9,566.6 L935.6,567.4 L935.2,568.3 L934.8,569.2 L934.5,570.0 L934.1,570.9 L933.7,571.7 L933.3,572.6 L932.9,573.4 L932.5,574.3 L932.1,575.1 L931.7,575.9 L931.2,576.7 L930.8,577.5 L930.4,578.3 L929.9,579.1 L929.5,579.9 L929.0,580.6 L928.5,581.4 L928.1,582.1 L927.6,582.9 L927.1,583.6 L926.6,584.3 L926.1,585.0 L925.5,585.7 L925.0,586.4 L924.5,587.1 L923.9,587.7 L923.3,588.4 L922.8,589.0 L922.2,589.7 L921.6,590.3 L921.0,590.9 L920.3,591.5 L919.7,592.1 L919.0,592.7 L918.4,593.3 L917.7,593.9 L917.0,594.5 L916.3,595.1 L915.6,595.7 L914.8,596.3 L914.1,596.9 L913.3,597.5 L912.6,598.1 L911.8,598.7 L911.0,599.3 L910.3,599.9 L909.5,600.5 L908.7,601.1 L907.9,601.7 L907.1,602.3 L906.3,602.8 L905.6,603.4 L904.8,604.0 L904.0,604.6 L903.2,605.1 L902.4,605.7 L901.7,606.3 L900.9,606.8 L900.1,607.4 L899.3,607.9 L898.5,608.4 L897.7,609.0 L896.9,609.5 L896.1,610.0 L895.3,610.6 L894.5,611.1 L893.7,611.6 L892.9,612.1 L892.1,612.7 L891.2,613.2 L890.4,613.7 L889.6,614.2 L888.7,614.7 L887.9,615.2 L887.1,615.7 L886.2,616.2 L885.4,616.7 L884.5,617.2 L883.7,617.7 L882.8,618.2 L882.0,618.7 L881.1,619.2 L880.3,619.7 L879.4,620.2 L878.6,620.7 L877.7,621.2 L876.9,621.7 L876.0,622.2 L875.1,622.7 L874.3,623.2 L873.4,623.6 L872.6,624.1 L871.7,624.6 L870.8,625.1 L870.0,625.6 L869.1,626.1 L868.2,626.6 L867.4,627.0 L866.5,627.5 L865.6,628.0 L864.7,628.5 L863.9,629.0 L863.0,629.5 L862.1,630.0 L861.2,630.5 L860.4,630.9 L859.5,631.4 L858.6,631.9 L857.7,632.4 L856.8,632.9 L856.0,633.4 L855.1,633.9 L854.2,634.4 L853.3,634.9 L852.5,635.4 L851.6,635.9 L850.7,636.4 L849.9,636.9 L849.0,637.4 L848.1,637.9 L847.3,638.4 L846.5,638.9 L845.7,639.3 L844.8,639.8 L844.0,640.2 L843.2,640.6 L842.4,641.0 L841.7,641.4 L840.9,641.8 L840.1,642.1 L839.3,642.5 L838.5,642.8 L837.7,643.1 L836.8,643.4 L836.0,643.7 L835.1,644.0 L834.3,644.3 L833.4,644.5 L832.5,644.8 L831.6,645.0 L830.7,645.3 L829.7,645.5 L828.8,645.8 L827.9,646.0 L827.0,646.3 L826.0,646.5 L825.1,646.7 L824.2,647.0 L823.2,647.2 L822.3,647.4 L821.4,647.6 L820.4,647.8 L819.5,648.0 L818.6,648.2 L817.6,648.3 L816.7,648.5 L815.8,648.7 L814.9,648.8 L814.0,649.0 L813.0,649.1 L812.1,649.2 L811.2,649.3 L810.3,649.4 L809.4,649.5 L808.5,649.6 L807.6,649.7 L806.7,649.7 L805.8,649.8 L804.9,649.8 L804.1,649.8 L803.2,649.8 L802.3,649.8 L801.5,649.8 L800.6,649.7 L799.7,649.7 L798.9,649.6 L798.0,649.5 L797.1,649.4 L796.3,649.3 L795.4,649.2 L794.5,649.0 L793.6,648.8 L792.8,648.7 L791.9,648.5 L791.1,648.3 L790.2,648.0 L789.4,647.8 L788.6,647.6 L787.7,647.3 L786.9,647.0 L786.1,646.8 L785.3,646.4 L784.5,646.1 L783.7,645.8 L782.8,645.4 L782.0,645.1 L781.2,644.7 L780.4,644.3 L779.6,643.9 L778.8,643.5 L778.0,643.1 L777.2,642.6 L776.4,642.2 L775.5,641.7 L774.7,641.2 L773.9,640.7 L773.1,640.3 L772.3,639.8 L771.5,639.3 L770.6,638.7 L769.8,638.2 L769.0,637.7 L768.2,637.2 L767.4,636.7 L766.6,636.1 L765.7,635.6 L764.9,635.1 L764.1,634.5 L763.3,634.0 L762.5,633.4 L761.7,632.9 L760.9,632.3 L760.0,631.8 L759.2,631.2 L758.4,630.7 L757.6,630.1 L756.8,629.5 L756.0,629.0 L755.2,628.4 L754.4,627.8 L753.6,627.3 L752.8,626.7 L752.0,626.1 L751.2,625.5 L750.4,625.0 L749.6,624.4 L748.8,623.8 L748.0,623.2 L747.2,622.6 L746.4,622.0 L745.6,621.5 L744.8,620.9 L744.0,620.3 L743.2,619.7 L742.4,619.1 L741.7,618.5 L740.9,617.9 L740.1,617.3 L739.3,616.7 L738.5,616.1 L737.7,615.5 L736.9,614.9 L736.2,614.3 L735.4,613.7 L734.6,613.1 L733.8,612.5 L733.0,611.9 L732.3,611.3 L731.5,610.7 L730.7,610.1 L730.0,609.5 L729.2,608.8 L728.4,608.2 L727.6,607.6 L726.9,607.0 L726.1,606.4 L725.4,605.7 L724.6,605.1 L723.8,604.5 L723.1,603.9 L722.3,603.2 L721.6,602.6 L720.8,602.0 L720.1,601.3 L719.3,600.7 L718.6,600.1 L717.8,599.4 L717.1,598.8 L716.4,598.2 L715.6,597.5 L714.9,596.9 L714.2,596.2 L713.5,595.6 L712.7,594.9 L712.0,594.3 L711.3,593.6 L710.6,593.0 L709.9,592.3 L709.2,591.6 L708.5,591.0 L707.8,590.3 L707.1,589.6 L706.5,589.0 L705.8,588.3 L705.1,587.6 L704.5,586.9 L703.8,586.3 L703.2,585.6 L702.5,584.9 L701.9,584.2 L701.2,583.5 L700.6,582.8 L700.0,582.1 L699.4,581.3 L698.7,580.6 L698.1,579.9 L697.5,579.2 L696.9,578.4 L696.3,577.7 L695.7,576.9 L695.1,576.2 L694.5,575.4 L694.0,574.7 L693.4,573.9 L692.8,573.1 L692.2,572.4 L691.7,571.6 L691.1,570.8 L690.5,570.0 L690.0,569.2 L689.4,568.5 L688.9,567.7 L688.3,566.9 L687.7,566.1 L687.2,565.3 L686.6,564.4 L686.1,563.6 L685.6,562.8 L685.0,562.0 L684.5,561.2 L683.9,560.4 L683.4,559.5 L682.8,558.7 L682.3,557.9 L681.7,557.0 L681.2,556.2 L680.7,555.4 L680.1,554.5 L679.6,553.7 L679.0,552.8 L678.5,552.0 L677.9,551.2 L677.3,550.3 L676.8,549.5 L676.2,548.6 L675.7,547.8 L675.1,546.9 L674.5,546.1 L673.9,545.2 L673.4,544.4 L672.8,543.5 L672.2,542.7 L671.6,541.9 L671.0,541.0 L670.4,540.2 L669.8,539.4 L669.2,538.6 L668.7,537.7 L668.1,536.9 L667.5,536.1 L666.9,535.3 L666.3,534.5 L665.7,533.7 L665.1,532.8 L664.5,532.0 L663.9,531.2 L663.4,530.4 L662.8,529.6 L662.2,528.8 L661.6,528.0 L661.0,527.2 L660.4,526.4 L659.9,525.6 L659.3,524.8 L658.7,524.0 L658.1,523.2 L657.5,522.4 L657.0,521.5 L656.4,520.7 L655.8,519.9 L655.3,519.1 L654.7,518.3 L654.1,517.5 L653.6,516.7 L653.0,515.9 L652.5,515.1 L651.9,514.3 L651.4,513.5 L650.9,512.7 L650.3,511.9 L649.8,511.1 L649.3,510.3 L648.8,509.5 L648.3,508.7 L647.8,507.9 L647.3,507.1 L646.8,506.3 L646.4,505.5 L645.9,504.7 L645.5,503.9 L645.0,503.1 L644.6,502.3 L644.2,501.5 L643.8,500.7 L643.5,499.9 L643.1,499.1 L642.8,498.3 L642.5,497.5 L642.2,496.7 L641.9,495.9 L641.7,495.1 L641.4,494.3 L641.2,493.5 L641.0,492.7 L640.8,491.9 L640.6,491.1 L640.5,490.2 L640.3,489.4 L640.2,488.5 L640.1,487.6 L640.0,486.7 L639.8,485.7 L639.7,484.8 L639.6,483.8 L639.5,482.8 L639.4,481.8 L639.3,480.8 L639.2,479.8 L639.1,478.8 L639.0,477.8 L638.9,476.8 L638.8,475.8 L638.7,474.9 L638.6,474.0 L638.6,473.1 L638.5,472.2 L638.5,471.4 L638.5,470.6 L638.5,469.7 L638.5,468.9 L638.6,468.0 L638.6,467.2 L638.7,466.3 L638.8,465.4 L638.9,464.5 L639.0,463.6 L639.1,462.6 L639.3,461.7 L639.4,460.7 L639.5,459.8 L639.7,458.8 L639.8,457.9 L640.0,456.9 L640.1,455.9 L640.3,455.0 L640.5,454.0 L640.6,453.0 L640.8,452.1 L641.0,451.1 L641.1,450.1 L641.3,449.1 L641.5,448.2 L641.7,447.2 L641.8,446.2 L642.0,445.2 L642.2,444.3 L642.4,443.3 L642.6,442.3 L642.8,441.4 L642.9,440.4 L643.1,439.4 L643.3,438.4 L643.5,437.5 L643.7,436.5 L643.9,435.5 L644.1,434.5 L644.3,433.6 L644.5,432.6 L644.7,431.6 L644.9,430.6 L645.1,429.7 L645.3,428.7 L645.5,427.7 L645.7,426.8 L645.9,425.8 L646.1,424.8 L646.3,423.9 L646.5,422.9 L646.7,421.9 L646.9,420.9 L647.1,420.0 L647.3,419.0 L647.5,418.0 L647.7,417.1 L648.0,416.1 L648.2,415.2 L648.4,414.2 L648.6,413.2 L648.8,412.3 L649.0,411.3 L649.3,410.4 L649.5,409.4 L649.7,408.4 L650.0,407.5 L650.2,406.5 L650.4,405.6 L650.7,404.6 L650.9,403.7 L651.1,402.7 L651.4,401.7 L651.6,400.8 L651.9,399.8 L652.1,398.9 L652.4,397.9 L652.6,397.0 L652.9,396.0 L653.1,395.1 L653.4,394.1 L653.6,393.2 L653.9,392.2 L654.2,391.3 L654.4,390.3 L654.7,389.4 L655.0,388.4 L655.2,387.5 L655.5,386.6 L655.8,385.6 L656.1,384.7 L656.4,383.8 L656.6,382.9 L656.9,381.9 L657.2,381.0 L657.5,380.1 L657.8,379.2 L658.1,378.3 L658.4,377.4 L658.8,376.5 L659.1,375.6 L659.4,374.7 L659.7,373.8 L660.1,372.9 L660.4,372.1 L660.7,371.2 L661.1,370.3 L661.5,369.5 L661.8,368.6 L662.2,367.8 L662.6,367.0 L663.0,366.2 L663.4,365.4 L663.8,364.6 L664.2,363.8 L664.6,363.0 L665.0,362.3 L665.5,361.6 L665.9,360.9 L666.4,360.2 L666.8,359.5 L667.3,358.8 L667.8,358.2 L668.3,357.5 L668.9,356.9 L669.4,356.2 L670.0,355.6 L670.6,355.0 L671.2,354.3 L671.8,353.7 L672.5,353.0 L673.1,352.4 L673.8,351.8 L674.5,351.1 L675.2,350.5 L675.9,349.9 L676.5,349.3 L677.2,348.7 L677.9,348.1 L678.6,347.5 L679.4,346.9 L680.1,346.3 L680.8,345.7 L681.6,345.1 L682.3,344.6 L683.1,344.0 L683.8,343.4 L684.6,342.9 L685.4,342.3 L686.2,341.7 L687.0,341.2 L687.8,340.6 L688.6,340.0 L689.4,339.5 L690.2,338.9 L691.0,338.3 L691.8,337.7 L692.6,337.1 L693.5,336.6 L694.3,336.0 L695.1,335.4 L696.0,334.8 L696.8,334.2 L697.6,333.6 L698.5,333.0 L699.3,332.4 L700.1,331.7 L701.0,331.1 L701.8,330.5 L702.6,329.8 L703.4,329.2 L704.3,328.5 L705.1,327.8 L705.9,327.2 L706.7,326.5 L707.5,325.8 L708.3,325.1 L709.1,324.4 L709.9,323.7 L710.7,323.0 L711.5,322.3 L712.2,321.6 L713.0,320.9 L713.7,320.2 L714.5,319.4 L715.2,318.7 L716.0,318.0 L716.7,317.3 L717.4,316.6 L718.2,315.9 L718.9,315.2 L719.6,314.5 L720.3,313.8 L721.0,313.1 L721.7,312.4 L722.4,311.7 L723.1,311.1 L723.8,310.4 L724.5,309.7 L725.2,309.0 L726.0,308.4 L726.7,307.7 L727.4,307.1 L728.1,306.4 L728.8,305.8 L729.5,305.1 L730.2,304.5 L730.9,303.9 L731.6,303.3 L732.3,302.7 L733.0,302.1 L733.8,301.5 L734.5,300.9 L735.2,300.3 L736.0,299.8 L736.7,299.2 L737.5,298.6 L738.3,298.0 L739.0,297.4 L739.8,296.9 L740.6,296.3 L741.4,295.7 L742.2,295.2 L743.0,294.6 L743.7,294.0 L744.5,293.5 L745.3,292.9 L746.1,292.4 L746.9,291.8 L747.7,291.3 L748.5,290.8 L749.3,290.2 L750.1,289.7 L750.9,289.2 L751.7,288.7 L752.5,288.2 L753.3,287.7 L754.1,287.2 L754.9,286.7 L755.7,286.2 L756.5,285.8 L757.4,285.3 L758.2,284.8 L759.0,284.4 L759.8,283.9 L760.6,283.5 L761.4,283.1 L762.3,282.7 L763.1,282.3 L763.9,281.9 L764.7,281.5 L765.6,281.1 L766.4,280.8 L767.2,280.4 L768.0,280.1 L768.9,279.7 L769.7,279.4 L770.5,279.1 L771.4,278.8 L772.2,278.6 L773.0,278.3 L773.9,278.0 L774.7,277.8 L775.6,277.6 L776.5,277.3 L777.3,277.1 L778.2,276.9 L779.1,276.7 L780.0,276.5 L780.9,276.4 L781.8,276.2 L782.8,276.0 L783.7,275.9 L784.6,275.7 L785.6,275.5 L786.5,275.4 L787.4,275.3 L788.4,275.1 L789.4,275.0 L790.3,274.8 L791.3,274.7 L792.3,274.6 L793.2,274.5 L794.2,274.3 L795.2,274.2 L796.2,274.1 L797.2,273.9 L798.2,273.8 L799.2,273.7 L800.2,273.5 L801.3,273.4 L802.3,273.2 L803.3,273.1 L804.4,272.9 L805.4,272.8 L806.4,272.6 L807.5,272.4 L808.5,272.2 L809.5,272.0 L810.5,271.8 L811.6,271.6 L812.6,271.4 L813.6,271.2 L814.6,271.0 L815.6,270.8 L816.6,270.6 L817.6,270.4 L818.6,270.2 L819.6,270.0 L820.6,269.7 L821.5,269.5 L822.5,269.3 L823.5,269.1 L824.5,268.9 L825.4,268.7 L826.4,268.4 L827.3,268.2 L828.3,268.0 L829.2,267.8 L830.2,267.6 L831.1,267.5 L832.1,267.3 L833.0,267.1 L833.9,266.9 L834.8,266.8 L835.7,266.6 L836.6,266.5 L837.5,266.4 L838.4,266.3 L839.3,266.2 L840.2,266.1 L841.0,266.0 L841.9,265.9 L842.7,265.9 L843.6,265.8 L844.4,265.8 L845.2,265.8 L846.0,265.8 L846.8,265.9 L847.5,265.9 L848.3,266.0 L849.1,266.1 L849.9,266.2 L850.8,266.4 L851.6,266.5 L852.5,266.7 L853.4,266.9 L854.3,267.1 L855.2,267.3 L856.1,267.5 L857.1,267.7 L858.1,268.0 L859.0,268.2 L860.0,268.4 L860.9,268.7 L861.9,268.9 L862.9,269.1 L863.8,269.4 L864.8,269.6 L865.8,269.8 L866.7,270.1 L867.7,270.3 L868.6,270.6 L869.6,270.8 L870.5,271.0 L871.4,271.3 L872.4,271.5 L873.3,271.8 L874.3,272.1 L875.2,272.3 L876.1,272.6 L877.1,272.8 L878.0,273.1 L878.9,273.4 L879.8,273.7 L880.8,273.9 L881.7,274.2 L882.6,274.5 L883.5,274.8 L884.4,275.1 L885.3,275.4 L886.2,275.7 L887.1,276.0 L888.0,276.3 L888.9,276.6 L889.8,276.9 L890.7,277.3 L891.6,277.6 L892.5,277.9 L893.4,278.3 L894.2,278.6 L895.1,279.0 L896.0,279.3 L896.9,279.7 L897.8,280.1 L898.6,280.5 L899.5,280.8 L900.4,281.2 L901.3,281.6 L902.2,282.0 L903.1,282.4 L903.9,282.8 L904.8,283.2 L905.7,283.6 L906.6,284.1 L907.4,284.5 L908.3,284.9 L909.2,285.3 L910.1,285.7 L910.9,286.2 L911.8,286.6 L912.7,287.0 L913.6,287.5 L914.4,287.9 L915.3,288.4 L916.2,288.8 L917.0,289.2 L917.9,289.7 L918.7,290.2 L919.6,290.6 L920.5,291.1 L921.3,291.5 L922.2,292.0 L923.0,292.5 L923.9,292.9 L924.7,293.4 L925.6,293.9 L926.4,294.4 L927.3,294.8 L928.1,295.3 L928.9,295.8 L929.8,296.3 L930.6,296.8 L931.5,297.3 L932.3,297.8 L933.1,298.3 L934.0,298.8 L934.8,299.3 L935.6,299.8 L936.4,300.3 L937.2,300.8 L938.1,301.3 L938.9,301.9 L939.7,302.4 L940.5,302.9 L941.3,303.4 L942.1,304.0 L942.9,304.5 L943.7,305.0 L944.5,305.6 L945.3,306.1 L946.1,306.7 L946.8,307.2 L947.6,307.8 L948.4,308.4 L949.2,308.9 L950.0,309.5 L950.8,310.1 L951.5,310.6 L952.3,311.2 L953.1,311.8 L953.9,312.4 L954.7,313.0 L955.4,313.6 L956.2,314.2 L957.0,314.8 L957.8,315.4 L958.5,316.0 L959.3,316.6 L960.1,317.2 L960.9,317.8 L961.6,318.4 L962.4,319.0 L963.2,319.6 L964.0,320.3 L964.7,320.9 L965.5,321.5 L966.3,322.1 L967.1,322.7 L967.8,323.4 L968.6,324.0 L969.4,324.6 L970.2,325.2 L971.0,325.9 L971.7,326.5 L972.5,327.1 L973.3,327.7 L974.1,328.4 L974.9,329.0 L975.7,329.6 L976.4,330.3 L977.2,330.9 L978.0,331.5 L978.8,332.1 L979.6,332.8 L980.4,333.4 L981.2,334.0 L982.0,334.6 L982.8,335.3 L983.6,335.9 L984.4,336.5 L985.2,337.1 L986.0,337.7 L986.8,338.4 L987.6,339.0 L988.4,339.6 L989.2,340.2 L990.0,340.8 L990.8,341.4 L991.6,342.0 L992.3,342.6 L993.1,343.3 L993.9,343.9 L994.7,344.5 L995.5,345.1 L996.3,345.7 L997.1,346.3 L997.9,346.9 L998.6,347.5 L999.4,348.1 L1000.2,348.7 L1001.0,349.3 L1001.8,349.9 L1002.5,350.5 L1003.3,351.2 L1004.1,351.8 L1004.9,352.4 L1005.6,353.0 L1006.4,353.6 L1007.2,354.2 L1007.9,354.8 L1008.7,355.5 L1009.4,356.1 L1010.2,356.7 L1010.9,357.3 L1011.7,357.9 L1012.4,358.6 L1013.2,359.2 L1013.9,359.8 L1014.6,360.4 L1015.4,361.1 L1016.1,361.7 L1016.8,362.4 L1017.5,363.0 L1018.3,363.6 L1019.0,364.3 L1019.7,364.9 L1020.4,365.6 L1021.1,366.2 L1021.8,366.9 L1022.5,367.6 L1023.2,368.2 L1023.9,368.9 L1024.6,369.6 L1025.3,370.2 L1026.0,370.9 L1026.7,371.6 L1027.4,372.3 L1028.1,373.0 L1028.8,373.7 L1029.5,374.4 L1030.1,375.0 L1030.8,375.7 L1031.5,376.4 L1032.2,377.1 L1032.9,377.8 L1033.5,378.5 L1034.2,379.2 L1034.9,380.0 L1035.5,380.7 L1036.2,381.4 L1036.9,382.1 L1037.5,382.8 L1038.2,383.5 L1038.8,384.2 L1039.5,385.0 L1040.2,385.7 L1040.8,386.4 L1041.5,387.1 L1042.1,387.9 L1042.7,388.6 L1043.4,389.3 L1044.0,390.1 L1044.7,390.8 L1045.3,391.5 L1045.9,392.3 L1046.5,393.0 L1047.2,393.8 L1047.8,394.5 L1048.4,395.3 L1049.0,396.0 L1049.6,396.8 L1050.3,397.5 L1050.9,398.3 L1051.5,399.0 L1052.1,399.8 L1052.7,400.5 L1053.3,401.3 L1053.8,402.1 L1054.4,402.8 L1055.0,403.6 L1055.6,404.4 L1056.2,405.1 L1056.8,405.9 L1057.3,406.7 L1057.9,407.5 L1058.4,408.2 L1059.0,409.0 L1059.6,409.8 L1060.1,410.6 L1060.7,411.4 L1061.2,412.2 L1061.7,413.0 L1062.3,413.8 L1062.8,414.6 L1063.3,415.4 L1063.9,416.2 L1064.4,417.0 L1064.9,417.8 L1065.4,418.6 L1065.9,419.4 L1066.4,420.3 L1067.0,421.1 L1067.5,421.9 L1068.0,422.7 L1068.5,423.5 L1068.9,424.4 L1069.4,425.2 L1069.9,426.0 L1070.4,426.9 L1070.9,427.7 L1071.4,428.6 L1071.8,429.4 L1072.3,430.2 L1072.8,431.1 L1073.3,431.9 L1073.7,432.8 L1074.2,433.7 L1074.6,434.5 L1075.1,435.4 L1075.5,436.2 L1076.0,437.1 L1076.4,437.9 L1076.9,438.8 L1077.3,439.7 L1077.7,440.5 L1078.2,441.4 L1078.6,442.3 L1079.0,443.1 L1079.5,444.0 L1079.9,444.9 L1080.3,445.7 L1080.7,446.6 L1081.1,447.5 L1081.5,448.4 L1081.9,449.2 L1082.3,450.1 L1082.7,451.0 L1083.0,451.9 L1083.4,452.7 L1083.8,453.6 L1084.1,454.5 L1084.5,455.4 L1084.9,456.3 L1085.2,457.2 L1085.6,458.0 L1085.9,458.9 L1086.2,459.8 L1086.6,460.7 L1086.9,461.6 L1087.2,462.5 L1087.5,463.4 L1087.9,464.3 L1088.2,465.3 L1088.5,466.2 L1088.8,467.1 L1089.1,468.0 L1089.4,468.9 L1089.7,469.8 L1090.0,470.8 L1090.3,471.7 L1090.5,472.6 L1090.8,473.5 L1091.1,474.5 L1091.4,475.4 L1091.7,476.3 L1091.9,477.3 L1092.2,478.2 L1092.5,479.1 L1092.7,480.1 L1093.0,481.0 L1093.3,481.9 L1093.5,482.9 L1093.8,483.8 L1094.0,484.8 L1094.3,485.7 L1094.5,486.6 L1094.7,487.6 L1095.0,488.5 L1095.2,489.5 L1095.4,490.4 L1095.7,491.3 L1095.9,492.3 L1096.1,493.2 L1096.3,494.2 L1096.6,495.1 L1096.8,496.1 L1097.0,497.0 L1097.2,498.0 L1097.4,499.0 L1097.6,499.9 L1097.8,500.9 L1098.0,501.8 L1098.2,502.8 L1098.4,503.7 L1098.6,504.7 L1098.8,505.7 L1099.0,506.6 L1099.2,507.6 L1099.3,508.5 L1099.5,509.5 L1099.7,510.5 L1099.9,511.4 L1100.1,512.4 L1100.2,513.4 L1100.4,514.3 L1100.6,515.3 L1100.7,516.2 L1100.9,517.2 L1101.0,518.2 L1101.2,519.1 L1101.3,520.1 L1101.5,521.1 L1101.6,522.0 L1101.8,523.0 L1101.9,524.0 L1102.1,524.9 L1102.2,525.9 L1102.3,526.9 L1102.5,527.8 L1102.6,528.8 L1102.7,529.8 L1102.8,530.7 L1102.9,531.7 L1103.0,532.7 L1103.2,533.6 L1103.3,534.6 L1103.4,535.6 L1103.5,536.5 L1103.6,537.5 L1103.6,538.5 L1103.7,539.4 L1103.8,540.4 L1103.9,541.3 L1104.0,542.3 L1104.0,543.2 L1104.1,544.2 L1104.1,545.2 L1104.2,546.1 L1104.2,547.1 L1104.3,548.0 L1104.3,549.0 L1104.3,549.9 L1104.4,550.9 L1104.4,551.8 L1104.4,552.8 L1104.4,553.7 L1104.4,554.7 L1104.4,555.6 L1104.4,556.6 L1104.4,557.5 L1104.4,558.5 L1104.3,559.4 L1104.3,560.4 L1104.3,561.3 L1104.3,562.3 L1104.2,563.2 L1104.2,564.2 L1104.2,565.2 L1104.1,566.1 L1104.1,567.1 L1104.0,568.0 L1104.0,569.0 L1103.9,569.9 L1103.8,570.9 L1103.7,571.8 L1103.7,572.8 L1103.6,573.7 L1103.5,574.7 L1103.4,575.6 L1103.3,576.6 L1103.2,577.5 L1103.1,578.5 L1102.9,579.4 L1102.8,580.3 L1102.7,581.3 L1102.5,582.2 L1102.4,583.2 L1102.2,584.1 L1102.1,585.0 L1101.9,586.0 L1101.7,586.9 L1101.6,587.8 L1101.4,588.8 L1101.2,589.7 L1101.0,590.6 L1100.8,591.6 L1100.6,592.5 L1100.4,593.4 L1100.1,594.4 L1099.9,595.3 L1099.7,596.2 L1099.5,597.2 L1099.2,598.1 L1099.0,599.0 L1098.7,600.0 L1098.5,600.9 L1098.2,601.8 L1098.0,602.8 L1097.7,603.7 L1097.4,604.6 L1097.2,605.6 L1096.9,606.5 L1096.6,607.4 L1096.3,608.3 L1096.0,609.2 L1095.7,610.2 L1095.4,611.1 L1095.1,612.0 L1094.8,612.9 L1094.5,613.8 L1094.2,614.7 L1093.9,615.6 L1093.5,616.6 L1093.2,617.5 L1092.9,618.4 L1092.5,619.3 L1092.2,620.2 L1091.8,621.1 L1091.4,622.0 L1091.1,622.9 L1090.7,623.8 L1090.3,624.7 L1090.0,625.6 L1089.6,626.5 L1089.2,627.4 L1088.8,628.2 L1088.4,629.1 L1088.0,630.0 L1087.6,630.9 L1087.2,631.8 L1086.8,632.7 L1086.4,633.6 L1085.9,634.5 L1085.5,635.4 L1085.1,636.3 L1084.7,637.2 L1084.3,638.1 L1083.8,638.9 L1083.4,639.8 L1083.0,640.7 L1082.6,641.6 L1082.1,642.5 L1081.7,643.4 L1081.3,644.3 L1080.8,645.2 L1080.4,646.1 L1080.0,647.0 L1079.5,647.8 L1079.1,648.7 L1078.6,649.6 L1078.2,650.5 L1077.7,651.4 L1077.3,652.3 L1076.8,653.1 L1076.4,654.0 L1075.9,654.9 L1075.4,655.8 L1075.0,656.6 L1074.5,657.5 L1074.1,658.4 L1073.6,659.3 L1073.1,660.1 L1072.6,661.0 L1072.2,661.9 L1071.7,662.7 L1071.2,663.6 L1070.7,664.5 L1070.3,665.3 L1069.8,666.2 L1069.3,667.0 L1068.8,667.9 L1068.3,668.8 L1067.8,669.6 L1067.3,670.5 L1066.8,671.3 L1066.3,672.2 L1065.8,673.0 L1065.3,673.9 L1064.8,674.7 L1064.3,675.5 L1063.8,676.4 L1063.3,677.2 L1062.7,678.0 L1062.2,678.9 L1061.7,679.7 L1061.2,680.5 L1060.6,681.4 L1060.1,682.2 L1059.5,683.0 L1059.0,683.8 L1058.5,684.6 L1057.9,685.4 L1057.4,686.2 L1056.8,687.0 L1056.3,687.9 L1055.7,688.7 L1055.1,689.5 L1054.6,690.3 L1054.0,691.1 L1053.4,691.9 L1052.9,692.6 L1052.3,693.4 L1051.7,694.2 L1051.1,695.0 L1050.5,695.8 L1049.9,696.6 L1049.3,697.4 L1048.7,698.1 L1048.1,698.9 L1047.5,699.7 L1046.8,700.5 L1046.2,701.2 L1045.6,702.0 L1045.0,702.8 L1044.3,703.5 L1043.7,704.3 L1043.1,705.1 L1042.4,705.8 L1041.8,706.6 L1041.1,707.3 L1040.5,708.1 L1039.8,708.8 L1039.2,709.6 L1038.5,710.4 L1037.9,711.1 L1037.2,711.9 L1036.6,712.6 L1035.9,713.4 L1035.3,714.1 L1034.6,714.9 L1033.9,715.6 L1033.3,716.4 L1032.6,717.1 L1031.9,717.9 L1031.3,718.6 L1030.6,719.4 L1030.0,720.1 L1029.3,720.9 L1028.6,721.6 L1028.0,722.4 L1027.3,723.1 L1026.6,723.9 L1026.0,724.6 L1025.3,725.4 L1024.7,726.1 L1024.0,726.9 L1023.4,727.6 L1022.8,728.3 L1022.2,729.0 L1021.6,729.7 L1021.1,730.4 L1020.7,730.9 L1020.3,731.4 L1019.9,731.9 L1020.3,732.3 L1020.7,731.9 L1021.2,731.5 L1021.8,731.0 L1022.4,730.5 L1023.1,730.0 L1023.8,729.4 L1024.5,728.8 L1025.3,728.1 L1026.0,727.5 L1026.8,726.9 L1027.6,726.2 L1028.3,725.6 L1029.1,724.9 L1029.8,724.2 L1030.6,723.6 L1031.3,722.9 L1032.1,722.3 L1032.9,721.6 L1033.6,720.9 L1034.4,720.3 L1035.1,719.6 L1035.9,718.9 L1036.6,718.3 L1037.4,717.6 L1038.1,716.9 L1038.9,716.3 L1039.6,715.6 L1040.3,714.9 L1041.1,714.2 L1041.8,713.6 L1042.6,712.9 L1043.3,712.2 L1044.0,711.5 L1044.8,710.8 L1045.5,710.1 L1046.2,709.4 L1047.0,708.7 L1047.7,708.0 L1048.4,707.3 L1049.2,706.6 L1049.9,705.9 L1050.6,705.2 L1051.3,704.5 L1052.1,703.8 L1052.8,703.1 L1053.5,702.4 L1054.2,701.6 L1054.9,700.9 L1055.6,700.2 L1056.3,699.5 L1057.0,698.7 L1057.7,698.0 L1058.4,697.2 L1059.1,696.5 L1059.8,695.7 L1060.5,695.0 L1061.2,694.2 L1061.8,693.4 L1062.5,692.6 L1063.2,691.9 L1063.8,691.1 L1064.5,690.3 L1065.1,689.5 L1065.7,688.7 L1066.3,687.8 L1067.0,687.0 L1067.6,686.2 L1068.2,685.4 L1068.8,684.6 L1069.4,683.7 L1070.0,682.9 L1070.6,682.1 L1071.2,681.3 L1071.7,680.4 L1072.3,679.6 L1072.9,678.8 L1073.5,677.9 L1074.1,677.1 L1074.6,676.3 L1075.2,675.4 L1075.8,674.6 L1076.3,673.7 L1076.9,672.9 L1077.4,672.0 L1078.0,671.2 L1078.5,670.3 L1079.1,669.5 L1079.6,668.6 L1080.2,667.8 L1080.7,666.9 L1081.3,666.1 L1081.8,665.2 L1082.3,664.3 L1082.9,663.5 L1083.4,662.6 L1083.9,661.8 L1084.5,660.9 L1085.0,660.0 L1085.5,659.2 L1086.0,658.3 L1086.5,657.4 L1087.1,656.6 L1087.6,655.7 L1088.1,654.8 L1088.6,653.9 L1089.1,653.1 L1089.6,652.2 L1090.1,651.3 L1090.7,650.4 L1091.2,649.6 L1091.7,648.7 L1092.2,647.8 L1092.7,646.9 L1093.2,646.1 L1093.7,645.2 L1094.2,644.3 L1094.7,643.4 L1095.2,642.5 L1095.7,641.7 L1096.1,640.8 L1096.6,639.9 L1097.1,639.0 L1097.6,638.1 L1098.1,637.2 L1098.5,636.3 L1099.0,635.4 L1099.5,634.5 L1099.9,633.5 L1100.4,632.6 L1100.9,631.7 L1101.3,630.8 L1101.8,629.9 L1102.2,628.9 L1102.7,628.0 L1103.1,627.1 L1103.5,626.1 L1104.0,625.2 L1104.4,624.3 L1104.8,623.3 L1105.2,622.4 L1105.7,621.4 L1106.1,620.5 L1106.5,619.5 L1106.9,618.6 L1107.3,617.6 L1107.7,616.7 L1108.1,615.7 L1108.4,614.7 L1108.8,613.8 L1109.2,612.8 L1109.6,611.8 L1109.9,610.9 L1110.3,609.9 L1110.6,608.9 L1111.0,608.0 L1111.3,607.0 L1111.7,606.0 L1112.0,605.0 L1112.3,604.0 L1112.6,603.1 L1113.0,602.1 L1113.3,601.1 L1113.6,600.1 L1113.9,599.1 L1114.2,598.1 L1114.5,597.1 L1114.7,596.1 L1115.0,595.1 L1115.3,594.1 L1115.6,593.1 L1115.8,592.1 L1116.1,591.0 L1116.3,590.0 L1116.6,589.0 L1116.8,588.0 L1117.0,586.9 L1117.2,585.9 L1117.4,584.9 L1117.7,583.9 L1117.9,582.8 L1118.0,581.8 L1118.2,580.8 L1118.4,579.7 L1118.6,578.7 L1118.7,577.7 L1118.9,576.6 L1119.1,575.6 L1119.2,574.5 L1119.3,573.5 L1119.5,572.5 L1119.6,571.4 L1119.7,570.4 L1119.8,569.4 L1119.9,568.3 L1120.0,567.3 L1120.1,566.2 L1120.2,565.2 L1120.3,564.2 L1120.4,563.1 L1120.5,562.1 L1120.5,561.0 L1120.6,560.0 L1120.6,558.9 L1120.7,557.9 L1120.7,556.9 L1120.7,555.8 L1120.7,554.8 L1120.7,553.7 L1120.7,552.7 L1120.7,551.6 L1120.7,550.6 L1120.7,549.5 L1120.7,548.5 L1120.6,547.4 L1120.6,546.4 L1120.5,545.3 L1120.5,544.3 L1120.4,543.2 L1120.4,542.2 L1120.3,541.2 L1120.2,540.1 L1120.2,539.1 L1120.1,538.0 L1120.0,537.0 L1119.9,536.0 L1119.8,535.0 L1119.7,533.9 L1119.6,532.9 L1119.5,531.9 L1119.4,530.9 L1119.3,529.8 L1119.2,528.8 L1119.0,527.8 L1118.9,526.8 L1118.8,525.8 L1118.7,524.7 L1118.5,523.7 L1118.4,522.7 L1118.3,521.7 L1118.1,520.7 L1118.0,519.7 L1117.8,518.7 L1117.7,517.7 L1117.6,516.6 L1117.4,515.6 L1117.2,514.6 L1117.1,513.6 L1116.9,512.6 L1116.8,511.6 L1116.6,510.6 L1116.4,509.6 L1116.3,508.6 L1116.1,507.6 L1115.9,506.5 L1115.7,505.5 L1115.6,504.5 L1115.4,503.5 L1115.2,502.5 L1115.0,501.5 L1114.8,500.5 L1114.6,499.5 L1114.4,498.5 L1114.2,497.5 L1114.0,496.5 L1113.8,495.5 L1113.6,494.5 L1113.4,493.5 L1113.2,492.5 L1113.0,491.5 L1112.8,490.5 L1112.6,489.5 L1112.3,488.5 L1112.1,487.5 L1111.9,486.5 L1111.6,485.5 L1111.4,484.5 L1111.2,483.5 L1110.9,482.5 L1110.7,481.5 L1110.4,480.5 L1110.2,479.5 L1109.9,478.5 L1109.6,477.5 L1109.4,476.5 L1109.1,475.5 L1108.8,474.5 L1108.5,473.5 L1108.3,472.6 L1108.0,471.6 L1107.7,470.6 L1107.4,469.6 L1107.1,468.6 L1106.8,467.6 L1106.5,466.6 L1106.2,465.7 L1105.9,464.7 L1105.6,463.7 L1105.2,462.7 L1104.9,461.7 L1104.6,460.7 L1104.3,459.8 L1103.9,458.8 L1103.6,457.8 L1103.2,456.8 L1102.9,455.8 L1102.5,454.9 L1102.2,453.9 L1101.8,452.9 L1101.4,451.9 L1101.0,451.0 L1100.7,450.0 L1100.3,449.0 L1099.9,448.0 L1099.5,447.1 L1099.1,446.1 L1098.7,445.2 L1098.2,444.2 L1097.8,443.2 L1097.4,442.3 L1097.0,441.3 L1096.5,440.4 L1096.1,439.4 L1095.7,438.5 L1095.2,437.6 L1094.8,436.6 L1094.3,435.7 L1093.9,434.8 L1093.4,433.8 L1092.9,432.9 L1092.5,432.0 L1092.0,431.1 L1091.5,430.2 L1091.1,429.2 L1090.6,428.3 L1090.1,427.4 L1089.6,426.5 L1089.2,425.6 L1088.7,424.7 L1088.2,423.8 L1087.7,422.9 L1087.2,422.0 L1086.7,421.1 L1086.2,420.2 L1085.7,419.3 L1085.1,418.4 L1084.6,417.5 L1084.1,416.6 L1083.6,415.7 L1083.0,414.8 L1082.5,413.9 L1082.0,413.1 L1081.4,412.2 L1080.9,411.3 L1080.3,410.4 L1079.8,409.5 L1079.2,408.7 L1078.7,407.8 L1078.1,406.9 L1077.6,406.0 L1077.0,405.2 L1076.4,404.3 L1075.8,403.5 L1075.2,402.6 L1074.7,401.7 L1074.1,400.9 L1073.5,400.0 L1072.9,399.2 L1072.3,398.3 L1071.7,397.5 L1071.0,396.7 L1070.4,395.8 L1069.8,395.0 L1069.2,394.2 L1068.6,393.3 L1067.9,392.5 L1067.3,391.7 L1066.7,390.9 L1066.0,390.1 L1065.4,389.2 L1064.8,388.4 L1064.1,387.6 L1063.5,386.8 L1062.8,386.0 L1062.2,385.2 L1061.5,384.4 L1060.9,383.6 L1060.2,382.8 L1059.5,382.1 L1058.9,381.3 L1058.2,380.5 L1057.5,379.7 L1056.9,378.9 L1056.2,378.2 L1055.5,377.4 L1054.8,376.6 L1054.2,375.8 L1053.5,375.1 L1052.8,374.3 L1052.1,373.6 L1051.4,372.8 L1050.7,372.0 L1050.0,371.3 L1049.3,370.5 L1048.6,369.8 L1047.9,369.0 L1047.2,368.3 L1046.5,367.5 L1045.8,366.8 L1045.1,366.1 L1044.4,365.3 L1043.7,364.6 L1043.0,363.8 L1042.2,363.1 L1041.5,362.4 L1040.8,361.7 L1040.1,360.9 L1039.4,360.2 L1038.6,359.5 L1037.9,358.8 L1037.2,358.1 L1036.4,357.3 L1035.7,356.6 L1034.9,355.9 L1034.2,355.2 L1033.4,354.5 L1032.7,353.8 L1031.9,353.1 L1031.1,352.4 L1030.4,351.7 L1029.6,351.0 L1028.8,350.3 L1028.1,349.6 L1027.3,348.9 L1026.5,348.2 L1025.7,347.6 L1024.9,346.9 L1024.2,346.2 L1023.4,345.6 L1022.6,344.9 L1021.8,344.2 L1021.0,343.6 L1020.2,342.9 L1019.4,342.3 L1018.6,341.6 L1017.8,341.0 L1017.0,340.4 L1016.2,339.7 L1015.5,339.1 L1014.7,338.5 L1013.9,337.8 L1013.1,337.2 L1012.3,336.6 L1011.5,335.9 L1010.7,335.3 L1009.9,334.7 L1009.1,334.1 L1008.3,333.5 L1007.5,332.8 L1006.7,332.2 L1005.9,331.6 L1005.1,331.0 L1004.3,330.4 L1003.5,329.8 L1002.7,329.2 L1001.9,328.6 L1001.1,327.9 L1000.3,327.3 L999.5,326.7 L998.7,326.1 L998.0,325.5 L997.2,324.9 L996.4,324.3 L995.6,323.7 L994.8,323.1 L994.0,322.5 L993.3,321.9 L992.5,321.3 L991.7,320.6 L990.9,320.0 L990.1,319.4 L989.4,318.8 L988.6,318.2 L987.8,317.6 L987.0,317.0 L986.3,316.3 L985.5,315.7 L984.7,315.1 L983.9,314.5 L983.2,313.9 L982.4,313.2 L981.6,312.6 L980.8,312.0 L980.0,311.4 L979.3,310.7 L978.5,310.1 L977.7,309.5 L976.9,308.8 L976.1,308.2 L975.3,307.6 L974.6,307.0 L973.8,306.3 L973.0,305.7 L972.2,305.1 L971.4,304.4 L970.6,303.8 L969.8,303.2 L969.0,302.6 L968.2,301.9 L967.4,301.3 L966.6,300.7 L965.8,300.1 L965.0,299.5 L964.1,298.8 L963.3,298.2 L962.5,297.6 L961.7,297.0 L960.8,296.4 L960.0,295.8 L959.2,295.2 L958.3,294.6 L957.5,294.0 L956.7,293.4 L955.8,292.8 L955.0,292.2 L954.1,291.6 L953.2,291.0 L952.4,290.4 L951.5,289.8 L950.7,289.2 L949.8,288.7 L948.9,288.1 L948.0,287.5 L947.2,287.0 L946.3,286.4 L945.4,285.9 L944.5,285.3 L943.7,284.8 L942.8,284.3 L941.9,283.7 L941.0,283.2 L940.1,282.7 L939.3,282.2 L938.4,281.6 L937.5,281.1 L936.6,280.6 L935.7,280.1 L934.8,279.6 L933.9,279.1 L933.0,278.6 L932.1,278.1 L931.2,277.6 L930.3,277.1 L929.4,276.6 L928.5,276.1 L927.6,275.6 L926.7,275.1 L925.8,274.7 L924.9,274.2 L924.0,273.7 L923.1,273.2 L922.1,272.8 L921.2,272.3 L920.3,271.8 L919.4,271.4 L918.5,270.9 L917.5,270.5 L916.6,270.0 L915.7,269.6 L914.8,269.1 L913.8,268.7 L912.9,268.2 L912.0,267.8 L911.0,267.4 L910.1,266.9 L909.2,266.5 L908.2,266.1 L907.3,265.7 L906.3,265.3 L905.4,264.9 L904.4,264.4 L903.5,264.0 L902.5,263.6 L901.5,263.2 L900.5,262.8 L899.6,262.5 L898.6,262.1 L897.6,261.7 L896.6,261.3 L895.6,261.0 L894.6,260.6 L893.7,260.3 L892.7,259.9 L891.7,259.6 L890.7,259.2 L889.7,258.9 L888.7,258.6 L887.7,258.3 L886.7,258.0 L885.7,257.7 L884.7,257.4 L883.7,257.1 L882.7,256.8 L881.7,256.5 L880.7,256.2 L879.8,255.9 L878.8,255.7 L877.8,255.4 L876.8,255.1 L875.8,254.9 L874.8,254.6 L873.8,254.3 L872.8,254.1 L871.8,253.8 L870.8,253.6 L869.8,253.3 L868.9,253.1 L867.9,252.9 L866.9,252.6 L865.9,252.4 L864.9,252.1 L864.0,251.9 L863.0,251.7 L862.0,251.4 L861.0,251.2 L860.0,251.0 L859.0,250.7 L858.0,250.5 L857.0,250.3 L855.9,250.0 L854.8,249.8 L853.7,249.6 L852.5,249.4 L851.4,249.3 L850.2,249.1 L849.0,249.0 L847.8,248.9 L846.6,248.9 L845.4,248.8 L844.2,248.8 L843.0,248.8 L841.9,248.9 L840.7,249.0 L839.6,249.1 L838.5,249.2 L837.4,249.3 L836.3,249.4 L835.2,249.6 L834.1,249.7 L833.0,249.9 L831.9,250.1 L830.9,250.3 L829.8,250.5 L828.8,250.7 L827.8,250.9 L826.8,251.1 L825.7,251.3 L824.7,251.5 L823.7,251.8 L822.7,252.0 L821.8,252.2 L820.8,252.4 L819.8,252.7 L818.8,252.9 L817.8,253.1 L816.9,253.3 L815.9,253.6 L814.9,253.8 L814.0,254.0 L813.0,254.2 L812.1,254.4 L811.1,254.6 L810.2,254.8 L809.2,255.0 L808.3,255.2 L807.3,255.4 L806.4,255.6 L805.5,255.8 L804.5,256.0 L803.6,256.1 L802.6,256.3 L801.7,256.4 L800.8,256.6 L799.8,256.7 L798.9,256.9 L797.9,257.0 L796.9,257.2 L796.0,257.3 L795.0,257.4 L794.0,257.6 L793.0,257.7 L792.0,257.8 L791.0,258.0 L790.0,258.1 L789.0,258.3 L788.0,258.4 L787.0,258.6 L786.0,258.7 L785.0,258.9 L783.9,259.0 L782.9,259.2 L781.9,259.4 L780.8,259.6 L779.8,259.7 L778.7,259.9 L777.7,260.2 L776.6,260.4 L775.6,260.6 L774.5,260.8 L773.5,261.1 L772.4,261.4 L771.3,261.6 L770.3,261.9 L769.2,262.2 L768.1,262.6 L767.1,262.9 L766.0,263.3 L765.0,263.6 L763.9,264.0 L762.9,264.4 L761.9,264.8 L760.8,265.3 L759.8,265.7 L758.8,266.2 L757.8,266.6 L756.9,267.1 L755.9,267.5 L754.9,268.0 L754.0,268.5 L753.0,269.0 L752.0,269.5 L751.1,270.0 L750.2,270.6 L749.3,271.1 L748.3,271.6 L747.4,272.2 L746.5,272.7 L745.6,273.3 L744.7,273.8 L743.8,274.4 L742.9,275.0 L742.1,275.5 L741.2,276.1 L740.3,276.7 L739.4,277.3 L738.6,277.8 L737.7,278.4 L736.9,279.0 L736.0,279.6 L735.2,280.2 L734.3,280.8 L733.5,281.4 L732.7,282.0 L731.8,282.6 L731.0,283.2 L730.2,283.8 L729.4,284.5 L728.5,285.1 L727.7,285.7 L726.9,286.4 L726.0,287.0 L725.2,287.7 L724.4,288.3 L723.6,289.0 L722.7,289.7 L721.9,290.3 L721.1,291.0 L720.3,291.7 L719.5,292.4 L718.7,293.1 L718.0,293.8 L717.2,294.6 L716.4,295.3 L715.7,296.0 L714.9,296.7 L714.2,297.4 L713.4,298.1 L712.7,298.8 L712.0,299.5 L711.2,300.3 L710.5,301.0 L709.8,301.7 L709.1,302.4 L708.4,303.1 L707.6,303.8 L706.9,304.5 L706.2,305.2 L705.5,305.9 L704.8,306.6 L704.1,307.3 L703.4,307.9 L702.7,308.6 L702.0,309.3 L701.3,309.9 L700.6,310.6 L699.9,311.2 L699.2,311.9 L698.5,312.5 L697.8,313.1 L697.1,313.8 L696.4,314.4 L695.7,315.0 L695.0,315.6 L694.3,316.2 L693.5,316.8 L692.8,317.4 L692.1,317.9 L691.3,318.5 L690.5,319.1 L689.8,319.7 L689.0,320.3 L688.2,320.8 L687.5,321.4 L686.7,322.0 L685.9,322.6 L685.1,323.1 L684.3,323.7 L683.5,324.3 L682.7,324.9 L681.9,325.5 L681.1,326.0 L680.2,326.6 L679.4,327.2 L678.6,327.8 L677.8,328.4 L676.9,329.0 L676.1,329.6 L675.3,330.2 L674.4,330.8 L673.6,331.5 L672.8,332.1 L671.9,332.8 L671.1,333.4 L670.3,334.1 L669.4,334.8 L668.6,335.5 L667.8,336.2 L667.0,336.9 L666.2,337.6 L665.4,338.3 L664.6,339.0 L663.8,339.8 L663.0,340.5 L662.3,341.2 L661.5,342.0 L660.7,342.8 L660.0,343.6 L659.2,344.4 L658.5,345.2 L657.7,346.1 L657.0,346.9 L656.2,347.8 L655.5,348.8 L654.8,349.7 L654.2,350.7 L653.5,351.6 L652.9,352.6 L652.3,353.6 L651.7,354.6 L651.1,355.6 L650.6,356.6 L650.1,357.6 L649.6,358.6 L649.1,359.5 L648.7,360.5 L648.2,361.5 L647.8,362.5 L647.4,363.5 L646.9,364.5 L646.5,365.5 L646.2,366.5 L645.8,367.5 L645.4,368.5 L645.0,369.5 L644.7,370.5 L644.3,371.5 L644.0,372.4 L643.7,373.4 L643.4,374.4 L643.0,375.4 L642.7,376.4 L642.4,377.4 L642.1,378.4 L641.8,379.4 L641.5,380.4 L641.2,381.3 L640.9,382.3 L640.7,383.3 L640.4,384.3 L640.1,385.3 L639.8,386.3 L639.6,387.3 L639.3,388.2 L639.0,389.2 L638.8,390.2 L638.5,391.2 L638.3,392.2 L638.0,393.2 L637.7,394.1 L637.5,395.1 L637.3,396.1 L637.0,397.1 L636.8,398.1 L636.5,399.0 L636.3,400.0 L636.0,401.0 L635.8,402.0 L635.6,403.0 L635.3,404.0 L635.1,405.0 L634.9,406.0 L634.6,406.9 L634.4,407.9 L634.2,408.9 L634.0,409.9 L633.7,410.9 L633.5,411.9 L633.3,412.9 L633.1,413.9 L632.9,414.9 L632.7,415.8 L632.4,416.8 L632.2,417.8 L632.0,418.8 L631.8,419.8 L631.6,420.8 L631.4,421.8 L631.2,422.8 L631.0,423.8 L630.8,424.7 L630.6,425.7 L630.4,426.7 L630.2,427.7 L630.0,428.7 L629.8,429.7 L629.6,430.7 L629.4,431.7 L629.3,432.7 L629.1,433.6 L628.9,434.6 L628.7,435.6 L628.5,436.6 L628.3,437.6 L628.1,438.6 L627.9,439.6 L627.8,440.6 L627.6,441.6 L627.4,442.6 L627.2,443.6 L627.0,444.6 L626.9,445.6 L626.7,446.6 L626.5,447.6 L626.4,448.6 L626.2,449.6 L626.0,450.6 L625.9,451.6 L625.7,452.6 L625.5,453.6 L625.4,454.6 L625.2,455.6 L625.1,456.6 L624.9,457.6 L624.8,458.7 L624.6,459.7 L624.5,460.7 L624.4,461.8 L624.2,462.8 L624.1,463.9 L624.0,465.0 L624.0,466.1 L623.9,467.2 L623.9,468.4 L623.8,469.5 L623.8,470.7 L623.9,471.8 L623.9,473.0 L624.0,474.1 L624.1,475.2 L624.2,476.3 L624.3,477.4 L624.4,478.4 L624.6,479.4 L624.7,480.4 L624.8,481.4 L624.9,482.3 L625.0,483.3 L625.1,484.3 L625.2,485.3 L625.3,486.3 L625.4,487.3 L625.5,488.4 L625.7,489.4 L625.8,490.5 L626.0,491.6 L626.2,492.7 L626.4,493.8 L626.6,495.0 L626.8,496.1 L627.1,497.2 L627.4,498.3 L627.8,499.4 L628.1,500.5 L628.5,501.6 L628.9,502.7 L629.3,503.8 L629.7,504.8 L630.2,505.8 L630.7,506.9 L631.1,507.9 L631.6,508.9 L632.1,509.8 L632.7,510.8 L633.2,511.8 L633.7,512.7 L634.3,513.6 L634.8,514.5 L635.3,515.4 L635.9,516.3 L636.4,517.2 L637.0,518.1 L637.6,519.0 L638.1,519.9 L638.7,520.7 L639.3,521.6 L639.8,522.4 L640.4,523.3 L641.0,524.1 L641.6,525.0 L642.2,525.8 L642.7,526.7 L643.3,527.5 L643.9,528.3 L644.5,529.2 L645.1,530.0 L645.7,530.8 L646.2,531.6 L646.8,532.5 L647.4,533.3 L648.0,534.1 L648.6,534.9 L649.2,535.7 L649.8,536.5 L650.4,537.4 L650.9,538.2 L651.5,539.0 L652.1,539.8 L652.7,540.6 L653.3,541.4 L653.9,542.2 L654.5,543.0 L655.0,543.8 L655.6,544.6 L656.2,545.5 L656.8,546.3 L657.4,547.1 L657.9,547.9 L658.5,548.7 L659.1,549.5 L659.6,550.3 L660.2,551.1 L660.8,551.9 L661.3,552.7 L661.9,553.5 L662.4,554.3 L663.0,555.1 L663.5,555.9 L664.0,556.7 L664.6,557.6 L665.1,558.4 L665.7,559.2 L666.2,560.0 L666.8,560.9 L667.3,561.7 L667.8,562.5 L668.4,563.4 L668.9,564.2 L669.5,565.0 L670.0,565.9 L670.6,566.7 L671.1,567.6 L671.7,568.4 L672.3,569.3 L672.8,570.1 L673.4,571.0 L673.9,571.8 L674.5,572.6 L675.1,573.5 L675.7,574.3 L676.2,575.2 L676.8,576.0 L677.4,576.9 L678.0,577.7 L678.6,578.6 L679.2,579.4 L679.8,580.2 L680.4,581.1 L681.1,581.9 L681.7,582.7 L682.3,583.6 L682.9,584.4 L683.6,585.2 L684.2,586.0 L684.9,586.9 L685.5,587.7 L686.2,588.5 L686.9,589.3 L687.5,590.1 L688.2,590.9 L688.9,591.7 L689.6,592.5 L690.3,593.3 L691.0,594.0 L691.7,594.8 L692.4,595.6 L693.2,596.4 L693.9,597.1 L694.6,597.9 L695.3,598.6 L696.1,599.4 L696.8,600.1 L697.6,600.8 L698.3,601.6 L699.1,602.3 L699.8,603.0 L700.6,603.7 L701.3,604.4 L702.1,605.1 L702.9,605.8 L703.6,606.5 L704.4,607.2 L705.2,607.9 L705.9,608.5 L706.7,609.2 L707.5,609.9 L708.2,610.6 L709.0,611.2 L709.8,611.9 L710.6,612.6 L711.3,613.2 L712.1,613.9 L712.9,614.5 L713.7,615.2 L714.5,615.8 L715.3,616.5 L716.0,617.1 L716.8,617.8 L717.6,618.4 L718.4,619.0 L719.2,619.7 L720.0,620.3 L720.8,621.0 L721.6,621.6 L722.4,622.2 L723.2,622.8 L724.0,623.5 L724.8,624.1 L725.6,624.7 L726.4,625.3 L727.2,626.0 L728.0,626.6 L728.8,627.2 L729.6,627.8 L730.4,628.4 L731.2,629.0 L732.0,629.7 L732.8,630.3 L733.6,630.9 L734.4,631.5 L735.2,632.1 L736.0,632.7 L736.9,633.3 L737.7,633.9 L738.5,634.5 L739.3,635.1 L740.1,635.7 L740.9,636.3 L741.8,636.9 L742.6,637.5 L743.4,638.1 L744.2,638.7 L745.1,639.3 L745.9,639.8 L746.7,640.4 L747.5,641.0 L748.4,641.6 L749.2,642.2 L750.0,642.8 L750.9,643.3 L751.7,643.9 L752.5,644.5 L753.4,645.1 L754.2,645.6 L755.1,646.2 L755.9,646.8 L756.8,647.3 L757.6,647.9 L758.5,648.5 L759.3,649.0 L760.2,649.6 L761.1,650.1 L761.9,650.7 L762.8,651.3 L763.7,651.8 L764.6,652.3 L765.5,652.9 L766.4,653.4 L767.3,654.0 L768.2,654.5 L769.1,655.0 L770.1,655.5 L771.0,656.0 L771.9,656.6 L772.9,657.1 L773.9,657.5 L774.9,658.0 L775.9,658.5 L776.9,658.9 L777.9,659.4 L778.9,659.8 L780.0,660.2 L781.0,660.6 L782.1,661.0 L783.2,661.4 L784.2,661.7 L785.3,662.0 L786.4,662.3 L787.5,662.6 L788.6,662.9 L789.7,663.1 L790.8,663.3 L791.9,663.6 L793.0,663.7 L794.1,663.9 L795.2,664.1 L796.3,664.2 L797.4,664.3 L798.5,664.5 L799.6,664.5 L800.8,664.6 L801.9,664.7 L803.0,664.7 L804.1,664.7 L805.3,664.7 L806.4,664.6 L807.5,664.6 L808.6,664.5 L809.7,664.5 L810.8,664.4 L811.8,664.3 L812.9,664.2 L814.0,664.0 L815.1,663.9 L816.1,663.8 L817.2,663.6 L818.2,663.4 L819.3,663.3 L820.3,663.1 L821.4,662.9 L822.4,662.7 L823.4,662.5 L824.5,662.3 L825.5,662.1 L826.5,661.8 L827.5,661.6 L828.5,661.4 L829.5,661.1 L830.6,660.9 L831.6,660.7 L832.6,660.4 L833.6,660.2 L834.6,659.9 L835.6,659.6 L836.6,659.3 L837.6,659.1 L838.7,658.7 L839.7,658.4 L840.8,658.1 L841.8,657.8 L842.9,657.4 L843.9,657.0 L845.0,656.6 L846.0,656.2 L847.1,655.7 L848.1,655.3 L849.1,654.8 L850.1,654.3 L851.1,653.8 L852.0,653.3 L853.0,652.8 L853.9,652.3 L854.8,651.8 L855.7,651.3 L856.6,650.8 L857.5,650.3 L858.4,649.8 L859.2,649.3 L860.1,648.8 L861.0,648.3 L861.8,647.9 L862.7,647.4 L863.6,646.9 L864.4,646.4 L865.3,645.9 L866.1,645.5 L867.0,645.0 L867.9,644.5 L868.8,644.0 L869.6,643.5 L870.5,643.1 L871.4,642.6 L872.3,642.1 L873.1,641.6 L874.0,641.1 L874.9,640.6 L875.8,640.2 L876.7,639.7 L877.5,639.2 L878.4,638.7 L879.3,638.2 L880.2,637.7 L881.1,637.2 L881.9,636.7 L882.8,636.2 L883.7,635.8 L884.6,635.3 L885.5,634.8 L886.3,634.3 L887.2,633.8 L888.1,633.3 L889.0,632.8 L889.9,632.2 L890.7,631.7 L891.6,631.2 L892.5,630.7 L893.4,630.2 L894.2,629.7 L895.1,629.2 L896.0,628.6 L896.9,628.1 L897.7,627.6 L898.6,627.1 L899.5,626.5 L900.4,626.0 L901.2,625.4 L902.1,624.9 L903.0,624.3 L903.9,623.8 L904.7,623.2 L905.6,622.7 L906.5,622.1 L907.3,621.5 L908.2,620.9 L909.1,620.3 L909.9,619.7 L910.8,619.1 L911.6,618.5 L912.5,617.9 L913.3,617.3 L914.2,616.7 L915.0,616.1 L915.8,615.5 L916.6,614.9 L917.4,614.2 L918.2,613.6 L919.0,613.0 L919.9,612.4 L920.7,611.8 L921.5,611.2 L922.3,610.5 L923.1,609.9 L923.9,609.2 L924.7,608.6 L925.5,607.9 L926.4,607.2 L927.2,606.5 L928.0,605.8 L928.8,605.1 L929.6,604.4 L930.5,603.6 L931.3,602.8 L932.1,602.1 L932.8,601.3 L933.6,600.4 L934.4,599.6 L935.1,598.8 L935.9,597.9 L936.6,597.0 L937.3,596.2 L938.0,595.3 L938.7,594.4 L939.3,593.5 L940.0,592.5 L940.6,591.6 L941.2,590.7 L941.8,589.7 L942.4,588.8 L943.0,587.9 L943.5,586.9 L944.1,586.0 L944.6,585.0 L945.1,584.1 L945.6,583.1 L946.1,582.1 L946.6,581.2 L947.0,580.2 L947.5,579.2 L947.9,578.3 L948.4,577.3 L948.8,576.3 L949.2,575.3 L949.6,574.4 L950.0,573.4 L950.4,572.4 L950.8,571.4 L951.2,570.5 L951.6,569.5 L951.9,568.5 L952.3,567.6 L952.7,566.6 L953.0,565.6 L953.4,564.7 L953.7,563.7 L954.1,562.7 L954.4,561.7 L954.7,560.8 L955.1,559.8 L955.4,558.8 L955.7,557.9 L956.0,556.9 L956.3,555.9 L956.7,554.9 L957.0,554.0 L957.3,553.0 L957.6,552.0 L957.9,551.1 L958.2,550.1 L958.5,549.1 L958.8,548.1 L959.1,547.2 L959.4,546.2 L959.7,545.2 L960.0,544.2 L960.2,543.3 L960.5,542.3 L960.8,541.3 L961.1,540.3 L961.4,539.4 L961.6,538.4 L961.9,537.4 L962.2,536.4 L962.5,535.5 L962.7,534.5 L963.0,533.5 L963.3,532.5 L963.5,531.6 L963.8,530.6 L964.1,529.6 L964.3,528.6 L964.6,527.7 L964.8,526.7 L965.1,525.7 L965.3,524.7 L965.6,523.7 L965.8,522.8 L966.1,521.8 L966.3,520.8 L966.6,519.8 L966.8,518.8 L967.1,517.8 L967.3,516.9 L967.6,515.9 L967.8,514.9 L968.0,513.9 L968.3,512.9 L968.5,511.9 L968.7,510.9 L969.0,509.9 L969.2,508.8 L969.4,507.8 L969.6,506.8 L969.8,505.8 L970.0,504.8 L970.2,503.7 L970.4,502.7 L970.6,501.7 L970.7,500.6 L970.9,499.6 L971.1,498.6 L971.2,497.5 L971.4,496.5 L971.5,495.4 L971.6,494.4 L971.8,493.4 L971.9,492.3 L972.0,491.3 L972.1,490.3 L972.2,489.2 L972.3,488.2 L972.4,487.1 L972.5,486.1 L972.6,485.1 L972.7,484.0 L972.7,483.0 L972.8,482.0 L972.9,481.0 L972.9,479.9 L973.0,478.9 L973.0,477.9 L973.1,476.9 L973.1,475.9 L973.2,474.9 L973.2,473.9 L973.3,472.9 L973.3,471.9 L973.4,470.9 L973.4,469.9 L973.5,468.9 L973.6,468.0 L973.6,467.0 L973.7,466.0 L973.7,465.0 L973.8,464.0 L973.9,463.0 L973.9,462.0 L974.0,461.0 L974.1,460.0 L974.1,459.0 L974.2,458.0 L974.2,457.0 L974.3,456.0 L974.4,455.0 L974.4,454.0 L974.5,453.0 L974.5,451.9 L974.6,450.9 L974.6,449.9 L974.7,448.9 L974.7,447.8 L974.8,446.8 L974.8,445.7 L974.8,444.7 L974.8,443.6 L974.8,442.6 L974.8,441.5 L974.8,440.5 L974.8,439.4 L974.8,438.3 L974.7,437.3 L974.7,436.2 L974.6,435.1 L974.6,434.0 L974.5,433.0 L974.4,431.9 L974.3,430.8 L974.2,429.8 L974.1,428.7 L973.9,427.6 L973.8,426.6 L973.7,425.5 L973.5,424.5 L973.3,423.4 L973.2,422.4 L973.0,421.4 L972.8,420.3 L972.6,419.3 L972.4,418.2 L972.2,417.2 L972.0,416.2 L971.8,415.1 L971.5,414.1 L971.3,413.0 L971.0,412.0 L970.7,411.0 L970.5,409.9 L970.2,408.9 L969.9,407.9 L969.6,406.8 L969.3,405.8 L968.9,404.8 L968.6,403.8 L968.3,402.8 L967.9,401.7 L967.5,400.7 L967.1,399.7 L966.8,398.7 L966.4,397.7 L966.0,396.7 L965.5,395.7 L965.1,394.8 L964.7,393.8 L964.2,392.8 L963.8,391.9 L963.3,390.9 L962.9,389.9 L962.4,389.0 L961.9,388.1 L961.5,387.1 L961.0,386.2 L960.5,385.3 L960.0,384.3 L959.5,383.4 L959.0,382.5 L958.5,381.6 L958.0,380.7 L957.4,379.8 L956.9,378.9 L956.4,378.0 L955.8,377.1 L955.3,376.2 L954.7,375.3 L954.1,374.4 L953.6,373.5 L953.0,372.6 L952.4,371.7 L951.8,370.8 L951.2,370.0 L950.6,369.1 L950.0,368.2 L949.3,367.4 L948.7,366.5 L948.0,365.7 L947.4,364.8 L946.7,364.0 L946.0,363.1 L945.3,362.3 L944.6,361.5 L943.9,360.6 L943.1,359.8 L942.4,359.0 L941.6,358.2 L940.8,357.4 L940.1,356.6 L939.3,355.9 L938.4,355.1 L937.6,354.4 L936.8,353.6 L935.9,352.9 L935.1,352.2 L934.2,351.5 L933.3,350.8 L932.5,350.2 L931.6,349.5 L930.7,348.9 L929.8,348.3 L928.9,347.7 L928.0,347.1 L927.1,346.5 L926.2,345.9 L925.3,345.4 L924.3,344.8 L923.4,344.3 L922.5,343.7 L921.6,343.2 L920.7,342.7 L919.8,342.2 L918.8,341.7 L917.9,341.2 L917.0,340.7 L916.1,340.2 L915.2,339.8 L914.3,339.3 L913.3,338.8 L912.4,338.4 L911.5,337.9 L910.6,337.5 L909.7,337.0 L908.8,336.6 L907.9,336.1 L907.0,335.7 L906.1,335.2 L905.2,334.8 L904.3,334.4 L903.4,333.9 L902.5,333.5 L901.6,333.0 L900.6,332.6 L899.7,332.2 L898.8,331.7 L897.9,331.3 L897.0,330.8 L896.0,330.4 L895.1,330.0 L894.2,329.6 L893.2,329.1 L892.3,328.7 L891.4,328.3 L890.4,327.9 L889.5,327.5 L888.5,327.1 L887.6,326.7 L886.7,326.3 L885.7,325.9 L884.8,325.5 L883.8,325.1 L882.9,324.7 L881.9,324.3 L881.0,323.9 L880.1,323.5 L879.1,323.2 L878.2,322.8 L877.2,322.4 L876.2,322.0 L875.3,321.7 L874.3,321.3 L873.4,320.9 L872.4,320.6 L871.4,320.2 L870.5,319.9 L869.5,319.5 L868.6,319.2 L867.6,318.9 L866.6,318.5 L865.7,318.2 L864.7,317.9 L863.7,317.5 L862.8,317.2 L861.9,316.9 L860.9,316.6 L860.0,316.2 L859.0,315.9 L858.1,315.6 L857.1,315.3 L856.1,314.9 L855.1,314.6 L854.1,314.3 L853.0,314.0 L851.9,313.7 L850.8,313.4 L849.6,313.1 L848.5,312.9 L847.3,312.7 L846.1,312.5 L844.9,312.3 L843.7,312.2 L842.5,312.2 L841.3,312.1 L840.2,312.1 L839.0,312.1 L837.9,312.2 L836.8,312.2 L835.7,312.3 L834.6,312.4 L833.5,312.5 L832.5,312.6 L831.4,312.7 L830.3,312.8 L829.3,313.0 L828.2,313.1 L827.2,313.3 L826.2,313.4 L825.2,313.6 L824.1,313.8 L823.1,313.9 L822.1,314.1 L821.1,314.3 L820.1,314.5 L819.1,314.7 L818.1,314.9 L817.1,315.1 L816.1,315.3 L815.1,315.5 L814.1,315.7 L813.1,315.9 L812.1,316.1 L811.1,316.3 L810.1,316.5 L809.1,316.7 L808.1,316.9 L807.1,317.2 L806.1,317.4 L805.1,317.6 L804.1,317.8 L803.1,318.1 L802.1,318.3 L801.1,318.5 L800.2,318.8 L799.2,319.0 L798.2,319.3 L797.2,319.5 L796.2,319.8 L795.2,320.0 L794.2,320.3 L793.2,320.5 L792.2,320.8 L791.2,321.1 L790.3,321.3 L789.3,321.6 L788.3,321.9 L787.3,322.2 L786.3,322.5 L785.3,322.8 L784.3,323.1 L783.3,323.4 L782.4,323.7 L781.4,324.0 L780.4,324.3 L779.4,324.6 L778.5,324.9 L777.5,325.3 L776.5,325.6 L775.5,326.0 L774.4,326.4 L773.3,326.8 L772.2,327.3 L771.1,327.9 L769.9,328.5 L768.8,329.2 L767.7,330.0 L766.6,330.8 L765.6,331.7 L764.7,332.6 L763.9,333.6 L763.1,334.5 L762.3,335.4 L761.6,336.3 L761.0,337.2 L760.3,338.0 L759.7,338.9 L759.1,339.8 L758.5,340.6 L757.9,341.5 L757.4,342.3 L756.8,343.2 L756.2,344.1 L755.7,344.9 L755.1,345.8 L754.6,346.7 L754.0,347.5 L753.5,348.4 L752.9,349.3 L752.4,350.2 L751.9,351.0 L751.3,351.9 L750.8,352.8 L750.3,353.6 L749.8,354.5 L749.3,355.4 L748.7,356.3 L748.2,357.1 L747.7,358.0 L747.2,358.9 L746.7,359.7 L746.2,360.6 L745.7,361.5 L745.2,362.4 L744.7,363.2 L744.2,364.1 L743.7,365.0 L743.2,365.9 L742.7,366.8 L742.2,367.6 L741.7,368.5 L741.2,369.4 L740.7,370.3 L740.2,371.1 L739.7,372.0 L739.3,372.9 L738.8,373.8 L738.3,374.7 L737.8,375.5 L737.3,376.4 L736.8,377.3 L736.3,378.2 L735.9,379.1 L735.4,379.9 L734.9,380.8 L734.4,381.7 L733.9,382.6 L733.5,383.5 L733.0,384.4 L732.5,385.3 L732.0,386.1 L731.5,387.0 L731.1,387.9 L730.6,388.8 L730.1,389.7 L729.6,390.6 L729.2,391.5 L728.7,392.4 L728.2,393.2 L727.8,394.1 L727.3,395.0 L726.8,395.9 L726.4,396.8 L725.9,397.7 L725.4,398.6 L725.0,399.5 L724.5,400.4 L724.1,401.3 L723.6,402.2 L723.2,403.1 L722.7,404.1 L722.2,405.0 L721.8,405.9 L721.4,406.9 L720.9,407.9 L720.5,408.9 L720.1,409.9 L719.6,410.9 L719.3,412.0 L718.9,413.1 L718.6,414.2 L718.3,415.4 L718.0,416.5 L717.8,417.6 L717.6,418.7 L717.4,419.8 L717.3,420.9 L717.1,421.9 L717.0,423.0 L716.9,424.0 L716.8,425.0 L716.7,426.1 L716.5,427.1 L716.4,428.1 L716.3,429.2 L716.3,430.2 L716.2,431.2 L716.1,432.2 L716.0,433.3 L715.9,434.3 L715.9,435.3 L715.8,436.4 L715.8,437.4 L715.7,438.4 L715.7,439.4 L715.6,440.4 L715.6,441.4 L715.5,442.4 L715.5,443.5 L715.5,444.5 L715.4,445.5 L715.4,446.5 L715.4,447.5 L715.3,448.5 L715.3,449.5 L715.3,450.5 L715.3,451.5 L715.2,452.5 L715.2,453.5 L715.2,454.5 L715.2,455.5 L715.1,456.5 L715.1,457.5 L715.1,458.5 L715.0,459.4 L715.0,460.4 L715.0,461.4 L714.9,462.4 L714.9,463.4 L714.8,464.4 L714.8,465.4 L714.7,466.4 L714.7,467.4 L714.6,468.4 L714.6,469.5 L714.6,470.5 L714.6,471.6 L714.6,472.7 L714.6,473.8 L714.6,474.9 L714.7,476.0 L714.8,477.1 L714.9,478.2 L715.0,479.3 L715.2,480.4 L715.3,481.4 L715.5,482.5 L715.7,483.5 L715.8,484.6 L716.0,485.6 L716.2,486.6 L716.4,487.7 L716.6,488.7 L716.8,489.8 L717.1,490.8 L717.3,491.8 L717.6,492.9 L717.9,493.9 L718.2,495.0 L718.5,496.0 L718.9,497.1 L719.2,498.1 L719.6,499.2 L720.0,500.2 L720.4,501.2 L720.9,502.3 L721.4,503.3 L721.9,504.3 L722.4,505.3 L722.9,506.3 L723.5,507.2 L724.0,508.2 L724.6,509.1 L725.2,510.0 L725.8,510.9 L726.4,511.8 L727.0,512.7 L727.6,513.5 L728.2,514.4 L728.8,515.2 L729.5,516.1 L730.1,516.9 L730.8,517.8 L731.4,518.6 L732.1,519.4 L732.8,520.2 L733.4,521.0 L734.1,521.9 L734.9,522.7 L735.6,523.5 L736.3,524.2 L737.1,525.0 L737.8,525.8 L738.6,526.6 L739.4,527.3 L740.2,528.1 L741.0,528.8 L741.8,529.5 L742.6,530.3 L743.5,531.0 L744.4,531.7 L745.3,532.3 L746.2,533.0 L747.1,533.6 L748.0,534.3 L749.0,534.9 L750.0,535.5 L751.0,536.1 L752.0,536.6 L753.0,537.1 L754.0,537.6 L755.1,538.1 L756.1,538.5 L757.1,539.0 L758.2,539.4 L759.2,539.8 L760.3,540.1 L761.3,540.5 L762.4,540.8 L763.4,541.1 L764.5,541.4 L765.5,541.7 L766.5,541.9 L767.6,542.2 L768.6,542.4 L769.7,542.6 L770.7,542.9 L771.7,543.1 L772.7,543.3 L773.8,543.5 L774.8,543.7 L775.8,543.8 L776.8,544.0 L777.8,544.2 L778.8,544.4 L779.8,544.5 L780.8,544.7 L781.8,544.8 L782.8,545.0 L783.8,545.2 L784.8,545.3 L785.8,545.5 L786.8,545.6 L787.7,545.8 L788.7,545.9 L789.7,546.1 L790.7,546.3 L791.7,546.4 L792.6,546.6 L793.6,546.8 L794.6,546.9 L795.6,547.1 L796.6,547.3 L797.6,547.4 L798.6,547.6 L799.6,547.8 L800.6,547.9 L801.6,548.1 L802.6,548.2 L803.6,548.4 L804.6,548.5 L805.7,548.7 L806.7,548.8 L807.7,549.0 L808.8,549.1 L809.8,549.2 L810.9,549.3 L811.9,549.4 L813.0,549.5 L814.0,549.6 L815.1,549.7 L816.2,549.8 L817.2,549.8 L818.3,549.9 L819.4,549.9 L820.5,550.0 L821.6,550.0 L822.7,550.0 L823.8,549.9 L824.9,549.9 L826.0,549.8 L827.1,549.8 L828.2,549.7 L829.3,549.6 L830.3,549.4 L831.4,549.3 L832.5,549.2 L833.6,549.0 L834.7,548.8 L835.7,548.6 L836.8,548.4 L837.8,548.2 L838.9,547.9 L840.0,547.7 L841.0,547.4 L842.1,547.2 L843.1,546.9 L844.2,546.6 L845.2,546.2 L846.3,545.9 L847.3,545.6 L848.3,545.2 L849.4,544.8 L850.4,544.5 L851.4,544.1 L852.4,543.7 L853.4,543.2 L854.4,542.8 L855.4,542.3 L856.4,541.9 L857.4,541.4 L858.4,540.9 L859.4,540.4 L860.4,539.8 L861.3,539.3 L862.3,538.7 L863.2,538.2 L864.2,537.6 L865.1,536.9 L866.0,536.3 L866.9,535.7 L867.8,535.0 L868.7,534.4 L869.6,533.7 L870.4,533.0 L871.3,532.3 L872.1,531.6 L872.9,530.9 L873.7,530.2 L874.5,529.5 L875.3,528.8 L876.1,528.1 L876.9,527.4 L877.6,526.6 L878.4,525.9 L879.1,525.2 L879.9,524.5 L880.6,523.7 L881.3,523.0 L882.0,522.3 L882.7,521.5 L883.5,520.8 L884.2,520.0 L884.9,519.3 L885.6,518.6 L886.3,517.8 L887.0,517.1 L887.6,516.4 L888.3,515.6 L889.0,514.9 L889.7,514.2 L890.4,513.5 L891.1,512.8 L891.7,512.0 L892.4,511.3 L893.1,510.6 L893.8,509.9 L894.5,509.1 L895.2,508.4 L895.9,507.6 L896.6,506.8 L897.3,506.0 L898.1,505.1 L898.8,504.3 L899.5,503.4 L900.2,502.5 L900.9,501.5 L901.5,500.6 L902.2,499.6 L902.8,498.6 L903.3,497.6 L903.9,496.6 L904.4,495.6 L904.9,494.5 L905.4,493.5 L905.9,492.5 L906.3,491.4 L906.7,490.4 L907.1,489.3 L907.5,488.3 L907.8,487.2 L908.2,486.1 L908.5,485.0 L908.8,483.9 L909.0,482.8 L909.3,481.7 L909.5,480.6 L909.7,479.5 L909.8,478.3 L910.0,477.2 L910.1,476.1 L910.2,475.0 L910.3,473.9 L910.3,472.7 L910.3,471.6 L910.4,470.5 L910.4,469.4 L910.3,468.4 L910.3,467.3 L910.3,466.2 L910.2,465.1 L910.1,464.1 L910.0,463.0 L910.0,462.0 L909.9,460.9 L909.8,459.9 L909.6,458.8 L909.5,457.8 L909.4,456.7 L909.2,455.7 L909.1,454.7 L908.9,453.6 L908.8,452.6 L908.6,451.5 L908.4,450.5 L908.2,449.5 L908.0,448.4 L907.8,447.4 L907.6,446.4 L907.3,445.3 L907.1,444.3 L906.8,443.2 L906.6,442.2 L906.3,441.2 L906.0,440.1 L905.7,439.1 L905.4,438.1 L905.1,437.0 L904.7,436.0 L904.4,435.0 L904.0,434.0 L903.6,433.0 L903.2,432.0 L902.8,431.0 L902.4,430.0 L902.0,429.1 L901.6,428.1 L901.1,427.1 L900.7,426.2 L900.2,425.2 L899.8,424.2 L899.3,423.3 L898.8,422.3 L898.3,421.4 L897.8,420.5 L897.3,419.5 L896.7,418.6 L896.2,417.7 L895.6,416.8 L895.1,415.8 L894.5,414.9 L893.9,414.1 L893.3,413.2 L892.7,412.3 L892.1,411.4 L891.5,410.6 L890.9,409.7 L890.2,408.9 L889.6,408.1 L889.0,407.2 L888.3,406.4 L887.7,405.6 L887.0,404.8 L886.4,404.0 L885.7,403.2 L885.1,402.4 L884.4,401.6 L883.8,400.8 L883.1,400.0 L882.4,399.2 L881.7,398.4 L881.0,397.7 L880.3,396.9 L879.6,396.1 L878.9,395.3 L878.2,394.6 L877.4,393.8 L876.7,393.0 L875.9,392.3 L875.1,391.5 L874.3,390.8 L873.4,390.0 L872.6,389.3 L871.7,388.6 L870.7,387.9 L869.8,387.2 L868.7,386.5 L867.7,385.9 L866.6,385.3 L865.4,384.7 L864.2,384.2 L862.9,383.8 L861.6,383.4 L860.3,383.2 L859.0,383.0 L857.7,382.9 L856.4,382.8 L855.1,382.9 L853.9,382.9 L852.7,383.1 L851.5,383.2 L850.4,383.4 L849.3,383.6 L848.2,383.9 L847.1,384.1 L846.1,384.4 L845.0,384.7 L844.0,385.0 L843.0,385.2 L842.0,385.5 L841.0,385.8 L840.0,386.2 L839.1,386.5 L838.1,386.8 L837.1,387.1 L836.1,387.4 L835.2,387.8 L834.2,388.1 L833.2,388.4 L832.2,388.8 L831.2,389.2 L830.3,389.6 L829.3,390.0 L828.3,390.3 L827.4,390.7 L826.4,391.1 L825.5,391.6 L824.6,392.0 L823.6,392.4 L822.7,392.8 L821.8,393.2 L820.9,393.6 L820.0,394.0 L819.0,394.4 L818.1,394.9 L817.1,395.3 L816.1,395.8 L815.1,396.3 L814.1,396.9 L813.1,397.5 L812.1,398.2 L811.1,398.9 L810.1,399.6 L809.2,400.4 L808.3,401.2 L807.4,402.1 L806.6,402.9 L805.9,403.8 L805.2,404.7 L804.5,405.6 L803.8,406.6 L803.2,407.5 L802.6,408.4 L802.0,409.3 L801.4,410.3 L800.9,411.2 L800.4,412.2 L799.9,413.1 L799.4,414.1 L798.9,415.0 L798.4,416.0 L798.0,416.9 L797.6,417.9 L797.1,418.9 L796.7,419.8 L796.3,420.8 L795.9,421.8 L795.5,422.7 L795.2,423.7 L794.8,424.7 L794.4,425.7 L794.1,426.7 L793.7,427.6 L793.4,428.6 L793.1,429.6 L792.8,430.6 L792.5,431.6 L792.2,432.6 L791.9,433.6 L791.6,434.6 L791.3,435.6 L791.0,436.6 L790.8,437.6 L790.5,438.6 L790.3,439.6 L790.0,440.6 L789.8,441.6 L789.5,442.6 L789.3,443.6 L789.1,444.7 L788.9,445.7 L788.7,446.8 L788.6,447.9 L788.4,448.9 L788.3,450.0 L788.2,451.1 L788.1,452.2 L788.1,453.4 L788.0,454.5 L788.1,455.6 L788.1,456.7 L788.1,457.8 L788.2,459.0 L788.4,460.1 L788.5,461.2 L788.7,462.3 L788.9,463.4 L789.1,464.5 L789.4,465.6 L789.7,466.7 L790.0,467.8 L790.4,468.8 L790.8,469.9 L791.2,470.9 L791.6,472.0 L792.1,473.0 L792.5,474.0 L793.0,475.0 L793.6,475.9 L794.1,476.9 L794.7,477.9 L795.3,478.8 L795.9,479.7 L796.5,480.6 L797.2,481.5 L797.8,482.4 L798.5,483.2 L799.2,484.1 L799.9,484.9 L800.7,485.8 L801.4,486.6 L802.2,487.4 L803.0,488.1 L803.8,488.9 L804.6,489.7 L805.5,490.4 L806.4,491.1 L807.3,491.8 L808.2,492.4 L809.2,493.1 L810.2,493.7 L811.2,494.3 L812.2,494.8 L813.2,495.3 L814.3,495.8 L815.3,496.3 L816.4,496.7 L817.5,497.1 L818.6,497.4 L819.7,497.8 L820.8,498.1 L821.9,498.3 L823.0,498.6 L824.1,498.8 L825.3,498.9 L826.4,499.1 L827.6,499.2 L828.7,499.2 L829.9,499.2 L831.0,499.2 L832.1,499.2 L833.3,499.1 L834.4,499.0 L835.6,498.8 L836.7,498.7 L837.8,498.5 L838.9,498.2 L840.0,498.0 L841.1,497.7 L842.2,497.3 L843.3,497.0 L844.4,496.6 L845.5,496.1 L846.6,495.6 L847.6,495.1 L848.7,494.5 L849.7,493.9 L850.8,493.2 L851.7,492.5 L852.7,491.7 L853.6,490.9 L854.5,490.1 L855.3,489.2 L856.1,488.3 L856.8,487.3 L857.5,486.4 L858.2,485.4 L858.8,484.4 L859.4,483.4 L859.9,482.3 L860.4,481.3 L860.9,480.2 L861.3,479.1 L861.7,478.0 L862.0,476.8 L862.3,475.7 L862.5,474.6 L862.7,473.5 L862.9,472.3 L863.0,471.2 L863.1,470.1 L863.2,469.0 L863.2,467.9 L863.3,466.8 L863.3,465.7 L863.2,464.6 L863.2,463.5 L863.1,462.4 L863.0,461.3 L862.9,460.2 L862.8,459.2 L862.6,458.1 L862.4,457.0 L862.2,456.0 L862.0,454.9 L861.8,453.8 L861.5,452.8 L861.2,451.7 L860.9,450.7 L860.6,449.7 L860.3,448.7 L859.9,447.7 L859.5,446.7 L859.2,445.7 L858.8,444.8 L858.4,444.0 L858.1,443.2 L857.8,442.5 L857.5,441.9 L857.2,441.4Z" fill="#000"/><circle cx="852.9" cy="441.6" r="3.6" fill="#000"/></svg>
<div class="a" style="left:1638px;top:88px;width:14px;height:895px;background:#3c3c3c"></div>
<div class="a" style="left:1639px;top:88px;width:13px;height:13px;border:1px solid #555;background:#424242"></div>
<div class="a" style="left:1639px;top:970px;width:13px;height:13px;border:1px solid #555;background:#424242"></div>
<div class="a" style="left:1639px;top:376px;width:13px;height:332px;border:1px solid #555;background:#404040"></div>
<div class="a" style="left:50px;top:983px;width:1588px;height:14px;background:#3c3c3c;border-top:1px solid #353535"></div>
<div class="a" style="left:50px;top:984px;width:13px;height:13px;border:1px solid #555;background:#424242"></div>
<div class="a" style="left:1625px;top:984px;width:13px;height:13px;border:1px solid #555;background:#424242"></div>
<div class="a" style="left:547px;top:984px;width:598px;height:13px;border:1px solid #555;background:#424242"></div>
<svg style="left:0;top:0" width="1920" height="1027"><path d="M1641,98 L1649,98 L1645,94Z M1641,973 L1649,973 L1645,977Z" fill="#9a9a9a"/><path d="M59,986 L59,994 L55,990Z M1629,986 L1629,994 L1633,990Z" fill="#9a9a9a"/></svg>
<div class="a" style="left:7px;top:1004px;width:15px;height:15px;border:1px solid #cfcfcf"></div>
<svg style="left:0;top:0" width="30" height="1027"><circle cx="19.10" cy="1011.30" r="0.6" fill="#e0e0e0"/><circle cx="18.48" cy="1013.60" r="0.6" fill="#e0e0e0"/><circle cx="16.80" cy="1015.28" r="0.6" fill="#e0e0e0"/><circle cx="14.50" cy="1015.90" r="0.6" fill="#e0e0e0"/><circle cx="12.20" cy="1015.28" r="0.6" fill="#e0e0e0"/><circle cx="10.52" cy="1013.60" r="0.6" fill="#e0e0e0"/><circle cx="9.90" cy="1011.30" r="0.6" fill="#e0e0e0"/><circle cx="10.52" cy="1009.00" r="0.6" fill="#e0e0e0"/><circle cx="12.20" cy="1007.32" r="0.6" fill="#e0e0e0"/><circle cx="14.50" cy="1006.70" r="0.6" fill="#e0e0e0"/><circle cx="16.80" cy="1007.32" r="0.6" fill="#e0e0e0"/><circle cx="18.48" cy="1009.00" r="0.6" fill="#e0e0e0"/></svg>
<div class="a" style="left:1463px;top:1001px;width:129px;height:22px;border:1px solid #3a3a3a"></div>
<svg style="left:0;top:0" width="1920" height="1027"><circle cx="1610.5" cy="1012.4" r="10" fill="#2c2c2c" stroke="#555" stroke-width="0.8"/><path d="M1610.5,1004 V1009 M1610.5,1016 V1021 M1603,1012.4 H1607" stroke="#555" stroke-width="0.8" stroke-dasharray="1,2"/><path d="M1610.5,1012.5 H1621" stroke="#f0f0f0" stroke-width="1.3"/><circle cx="1610.8" cy="1012.5" r="1.3" fill="#fff"/><circle cx="1621" cy="1012.5" r="1.3" fill="#fff"/></svg>
<div class="a" style="left:1812px;top:1010px;width:82px;height:5px;background:#363636;border-radius:2.5px"></div>
<div class="a" style="left:1813px;top:1011px;width:15px;height:3px;background:#6f9ac4"></div>
<div class="a" style="left:1827.5px;top:1006.5px;width:12px;height:12px;background:#444;border:1px solid #5c5c5c;box-shadow:0 0 0 1px #333;border-radius:3px"></div>
<svg style="left:0;top:0" width="1920" height="1027"><rect x="1899.5" y="1007.5" width="15.5" height="9.5" stroke="#e0e0e0" stroke-width="1.1" fill="none"/><path d="M1907,1017 V1019 M1901,1019.5 H1913" stroke="#e0e0e0" stroke-width="1.1"/><rect x="1906.3" y="1011.3" width="1.8" height="1.8" fill="#e6e6e6"/></svg>
<div class="a" style="left:1651px;top:56px;width:1px;height:941px;background:#3a3a3a"></div>
<div class="a" style="left:1658px;top:59px;width:150px;height:21px;border:1px solid #333;border-bottom:none;border-radius:3px 3px 0 0;background:#434343;box-shadow:inset 1px 1px 0 #575757,inset -1px 0 0 #575757"></div>
<div class="a" style="left:1807px;top:56px;width:91px;height:25px;border:1px solid #333;border-bottom:none;border-radius:4px 4px 0 0;background:#474747;box-shadow:inset 1px 1px 0 #5a5a5a,inset -1px 0 0 #5a5a5a"></div>
<div class="a" style="left:1658px;top:79px;width:150px;height:1px;background:#3a3a3a"></div>
<div class="a" style="left:1897px;top:79px;width:23px;height:1px;background:#3a3a3a"></div>
<svg style="left:0;top:0" width="1920" height="1027"><circle cx="1668" cy="89" r="7.6" stroke="#d9d9d9" stroke-width="1.1" fill="none"/><rect x="1664" y="89.2" width="8" height="3.9" fill="#d9d9d9"/><path d="M1670.6,89.4 V86.6 A2.6,2.6 0 0 0 1665.4,86.4" stroke="#d9d9d9" stroke-width="1.1" fill="none"/><rect x="1880.5" y="86.5" width="9" height="8" stroke="#d9d9d9" stroke-width="1.2" fill="none"/><path d="M1885.5,86.5 V82.5 H1894.5 V90.5 H1889.5" stroke="#d9d9d9" stroke-width="1.2" fill="none"/><path d="M1905,83.5 L1915,93.5 M1915,83.5 L1905,93.5" stroke="#d9d9d9" stroke-width="1.3"/><circle cx="1668" cy="297.8" r="7.6" stroke="#d9d9d9" stroke-width="1.1" fill="none"/><rect x="1664" y="298.0" width="8" height="3.9" fill="#d9d9d9"/><path d="M1670.6,298.2 V295.40000000000003 A2.6,2.6 0 0 0 1665.4,295.2" stroke="#d9d9d9" stroke-width="1.1" fill="none"/><rect x="1880.5" y="295.5" width="9" height="8" stroke="#d9d9d9" stroke-width="1.2" fill="none"/><path d="M1885.5,295.5 V291.5 H1894.5 V299.5 H1889.5" stroke="#d9d9d9" stroke-width="1.2" fill="none"/><path d="M1905,292.5 L1915,302.5 M1915,292.5 L1905,302.5" stroke="#d9d9d9" stroke-width="1.3"/><circle cx="1668" cy="631" r="7.6" stroke="#d9d9d9" stroke-width="1.1" fill="none"/><rect x="1664" y="631.2" width="8" height="3.9" fill="#d9d9d9"/><path d="M1670.6,631.4 V628.6 A2.6,2.6 0 0 0 1665.4,628.4" stroke="#d9d9d9" stroke-width="1.1" fill="none"/><rect x="1880.5" y="628.5" width="9" height="8" stroke="#d9d9d9" stroke-width="1.2" fill="none"/><path d="M1885.5,628.5 V624.5 H1894.5 V632.5 H1889.5" stroke="#d9d9d9" stroke-width="1.2" fill="none"/><path d="M1905,625.5 L1915,635.5 M1915,625.5 L1905,635.5" stroke="#d9d9d9" stroke-width="1.3"/></svg>
<div class="a" style="left:1787px;top:107px;width:128px;height:20px;border:1px solid #333;border-radius:3px;background:linear-gradient(#4a4a4a,#404040);box-shadow:inset 0 0 0 1px #565656"></div>
<svg style="left:0;top:0" width="1920" height="300"><path d="M1900,115 L1908,115 L1904,119Z" fill="#a0a0a0"/></svg>
<div class="a" style="left:1786px;top:134px;width:130px;height:21px;border:1px solid #333;border-radius:3px;background:#333;overflow:hidden"><div class="a" style="left:0;top:0;width:22px;height:19px;background:#52718e"></div></div>
<div class="a" style="left:1767px;top:165px;width:14px;height:14px;background:#333"></div>
<div class="a" style="left:1786px;top:162px;width:130px;height:21px;border:1px solid #333;border-radius:3px;background:#333;overflow:hidden"><div class="a" style="left:0;top:0;width:53px;height:19px;background:#3a3a3a"></div></div>
<svg style="left:0;top:0" width="1920" height="300"><path d="M1905,143 L1912,143 L1908.5,139.5Z M1905,147 L1912,147 L1908.5,150.5Z" fill="#aaa"/><path d="M1905,171 L1912,171 L1908.5,167.5Z M1905,175 L1912,175 L1908.5,178.5Z" fill="#666"/><path d="M1902,135 V154 M1902,163 V182" stroke="#3e3e3e" stroke-width="1"/></svg>
<div class="a" style="left:1902px;top:135px;width:13px;height:19px;border:1px solid #545454;border-left-color:#3a3a3a;border-radius:0 3px 3px 0"></div>
<div class="a" style="left:1902px;top:163px;width:13px;height:19px;border:1px solid #4c4c4c;border-left-color:#3a3a3a;border-radius:0 3px 3px 0"></div>
<div class="a" style="left:1871px;top:343px;width:13px;height:26px;border:1px solid #545454;border-left-color:#3a3a3a;border-radius:0 3px 3px 0"></div>
<div class="a" style="left:1786px;top:192px;width:14px;height:14px;background:#333"></div>
<div class="a" style="left:1786px;top:218px;width:14px;height:14px;background:#333"></div>
<svg style="left:0;top:0" width="1920" height="300"><path d="M1789,199 L1792,203 L1797,194 M1789,225 L1792,229 L1797,220" stroke="#dedede" stroke-width="1.5" fill="none"/></svg>
<div class="a" style="left:1662px;top:241px;width:254px;height:1px;background:#353535"></div>
<div class="a" style="left:1662px;top:251px;width:14px;height:14px;background:#333"></div>
<svg style="left:0;top:0" width="1920" height="1027"><path d="M1782,286.5 H1800 M1782,620.5 H1800" stroke="#888" stroke-width="1" stroke-dasharray="1.5,1.5"/><path d="M1655.5,520 V538" stroke="#888" stroke-width="1" stroke-dasharray="1.5,1.5"/></svg>
<div class="a" style="left:1660px;top:308px;width:225px;height:30px;border:1px solid #333;border-radius:3px;background:linear-gradient(#4a4a4a,#3f3f3f);box-shadow:inset 0 0 0 1px #565656"></div>
<div class="a" style="left:1660px;top:342px;width:225px;height:28px;border:1px solid #333;border-radius:3px;background:#333;overflow:hidden"><div class="a" style="left:0;top:0;width:211px;height:26px;background:#52718e"></div></div>
<svg style="left:0;top:0" width="1920" height="1027"><path d="M1870,321 L1879,321 L1874.5,325Z" fill="#a0a0a0"/><path d="M1896,314 H1910 L1905,322 V331 L1901,329 V322Z" stroke="#d9d9d9" stroke-width="1.2" fill="none"/><path d="M1911,333 L1916,333 L1913.5,335.5Z" fill="#999"/><path d="M1896.5,351.5 H1909 M1896.5,356 H1909 M1896.5,360.5 H1909" stroke="#d9d9d9" stroke-width="1.5"/><path d="M1911,366 L1916,366 L1913.5,368.5Z" fill="#999"/><path d="M1875,352 L1881,352 L1878,349Z M1875,361 L1881,361 L1878,364Z" fill="#777"/><path d="M1871.5,343 V369" stroke="#3e3e3e"/></svg>
<div class="a" style="left:1659px;top:372px;width:261px;height:214px;background:#3a3a3a"></div>
<div class="a" style="left:1704px;top:374px;width:214px;height:26px;background:#52718e"></div>
<div class="a" style="left:1686px;top:381px;width:14px;height:14px;background:#333"></div>
<div class="a" style="left:1686px;top:408px;width:14px;height:14px;background:#333"></div>
<div class="a" style="left:1707px;top:377px;width:22px;height:21px;background:#fff;border:1px solid #222"></div>
<div class="a" style="left:1708px;top:407px;width:21px;height:12px;background:#fff"></div>
<svg style="left:0;top:0" width="1920" height="1027"><path d="M1664.2,387.7 Q1671,377.7 1677.8,387.7" stroke="#d9d9d9" stroke-width="1.1" fill="none"/><circle cx="1671" cy="386.4" r="3.2" fill="#d9d9d9"/><path d="M1664.6,389.59999999999997 Q1671,396.7 1677.4,389.59999999999997" stroke="#d9d9d9" stroke-width="1.1" fill="none"/><path d="M1664.2,414.7 Q1671,404.7 1677.8,414.7" stroke="#d9d9d9" stroke-width="1.1" fill="none"/><circle cx="1671" cy="413.4" r="3.2" fill="#d9d9d9"/><path d="M1664.6,416.59999999999997 Q1671,423.7 1677.4,416.59999999999997" stroke="#d9d9d9" stroke-width="1.1" fill="none"/><path d="M1689.3,387.8 L1692.2,392.4 L1696.4,384.2" stroke="#c4c4c4" stroke-width="1.4" fill="none"/><g fill="#c8c8c8"><rect x="1722" y="391" width="3" height="3"/><rect x="1725" y="394" width="3" height="3"/><rect x="1719" y="394" width="3" height="3"/></g><g transform="translate(1708.5,378) scale(0.0395) translate(-620,-245)"><use href="#spir" transform="translate(0,0)"/></g><path d="M1736,376.5 H1745 V383 L1743,385.5 M1736,378 L1742,384 M1738,384 H1742 V380" stroke="#d9d9d9" stroke-width="1" fill="none"/><path d="M1736,403.5 H1745 V410 L1743,412.5 M1736,405 L1742,411 M1738,411 H1742 V407" stroke="#d9d9d9" stroke-width="1" fill="none"/><rect x="1864" y="383" width="12" height="9" fill="#8aa0b8"/><path d="M1871,383 V380 A3,3 0 0 1 1876,380" stroke="#8aa0b8" stroke-width="1.8" fill="none"/><rect x="1864" y="410" width="12" height="10" fill="#d9d9d9"/><path d="M1866.5,410 V407 A3.5,3.5 0 0 1 1873.5,407 V410" stroke="#d9d9d9" stroke-width="1.8" fill="none"/><text x="1881" y="393.5" font-family="Liberation Sans" font-style="italic" font-size="17" fill="#7d93aa" textLength="14" lengthAdjust="spacingAndGlyphs">α</text><text x="1881" y="420.5" font-family="Liberation Sans" font-style="italic" font-size="17" fill="#6a6a6a" textLength="14" lengthAdjust="spacingAndGlyphs">α</text><g fill="#7e93a8"><rect x="1900" y="380" width="5" height="5"/><rect x="1910" y="380" width="5" height="5"/><rect x="1905" y="385" width="5" height="5"/><rect x="1900" y="390" width="5" height="5"/><rect x="1910" y="390" width="5" height="5"/></g><g fill="#5e5e5e"><rect x="1900" y="407" width="5" height="5"/><rect x="1910" y="407" width="5" height="5"/><rect x="1905" y="412" width="5" height="5"/><rect x="1900" y="417" width="5" height="5"/><rect x="1910" y="417" width="5" height="5"/></g></svg>
<svg style="left:0;top:0" width="1920" height="1027" stroke="#d9d9d9" fill="none"><path d="M1664,601 H1684 M1674,591 V611" stroke-width="2"/><path d="M1691,599 L1698,599 L1694.5,603Z" fill="#999" stroke="none"/><rect x="1711" y="592" width="17" height="14" stroke-width="1.6"/><path d="M1708,596 V610 H1724" stroke-width="1.6"/><path d="M1740,596 L1750,606 L1760,596" stroke-width="1.8"/><path d="M1772,606 L1782,596 L1792,606" stroke-width="1.8"/><path d="M1804,595 H1824 M1804,601 H1824 M1804,607 H1824" stroke-width="1.6"/><rect x="1814" y="593" width="3" height="4" fill="#d9d9d9"/><rect x="1808" y="599" width="3" height="4" fill="#d9d9d9"/><rect x="1815" y="605" width="3" height="4" fill="#d9d9d9"/><path d="M1831,599 L1838,599 L1834.5,603Z" fill="#999" stroke="none"/><path d="M1896,596 H1913 M1901,596 V593 H1908 V596" stroke-width="1.6"/><path d="M1898,598 H1911 L1910,611 H1899Z" fill="#d9d9d9" stroke="none"/></svg>
<div class="a" style="left:1660px;top:641px;width:158px;height:22px;border:1px solid #333;border-radius:3px;background:linear-gradient(#4a4a4a,#404040);box-shadow:inset 0 0 0 1px #565656"></div>
<div class="a" style="left:1820px;top:641px;width:50px;height:22px;border:1px solid #333;border-radius:3px;background:linear-gradient(#4a4a4a,#404040);box-shadow:inset 0 0 0 1px #565656"></div>
<svg style="left:0;top:0" width="1920" height="1027"><path d="M1803,649 L1812,649 L1807.5,653Z" fill="#a0a0a0"/><path d="M1826,644 H1834 V659 L1830,655 L1826,659Z" stroke="#d9d9d9" stroke-width="1.3" fill="none"/><path d="M1864,658 L1868,658 L1866,660Z" fill="#999"/><path d="M1877,647.5 H1889 M1877,651.5 H1889 M1877,655.5 H1889" stroke="#d9d9d9" stroke-width="1.5"/><rect x="1899.5" y="643.5" width="16" height="16" stroke="#d9d9d9" stroke-width="1.2" fill="none"/><path d="M1906,644 V650" stroke="#d9d9d9" stroke-width="1" stroke-dasharray="1,1"/></svg>
<div class="a" style="left:1659px;top:665px;width:242px;height:308px;background:#2e2e2e;overflow:hidden">
<svg style="left:2px;top:1px;overflow:hidden" width="58" height="58"><defs><filter id="bl1" x="-50%" y="-50%" width="200%" height="200%"><feGaussianBlur stdDeviation="1"/></filter><filter id="bl2" x="-50%" y="-50%" width="200%" height="200%"><feGaussianBlur stdDeviation="2"/></filter><filter id="bl5" x="-50%" y="-50%" width="200%" height="200%"><feGaussianBlur stdDeviation="5"/></filter><pattern id="chk" width="5" height="5" patternUnits="userSpaceOnUse"><rect width="5" height="5" fill="#f0f0f0"/><rect width="2.5" height="2.5" fill="#a8a8a8"/><rect x="2.5" y="2.5" width="2.5" height="2.5" fill="#a8a8a8"/></pattern><linearGradient id="gk" x1="0" x2="1"><stop offset="0" stop-color="#bbb"/><stop offset="1" stop-color="#222"/></linearGradient><linearGradient id="gk2" x1="0" x2="1"><stop offset="0" stop-color="#999"/><stop offset="1" stop-color="#333"/></linearGradient><linearGradient id="tbg" x1="0" y1="0" x2="1" y2="1"><stop offset="0" stop-color="#dcdcdc"/><stop offset="1" stop-color="#cbcbcb"/></linearGradient><radialGradient id="rb"><stop offset="0" stop-color="#1a1a1a"/><stop offset="0.55" stop-color="#1a1a1a" stop-opacity="0.9"/><stop offset="1" stop-color="#1a1a1a" stop-opacity="0"/></radialGradient></defs><rect width="58" height="58" fill="url(#tbg)"/><path d="M14,41 Q12,52 25,55 Q40,54 57,45" stroke="url(#chk)" stroke-width="12" fill="none" opacity="0.9"/><path d="M29,11 L51,0 L58,0 L58,17 L43,36 L43,24Z" fill="#3d5b92"/><path d="M22,19 L29,11 L43,24 L43,37 L34,40 L21,30Z" fill="#f6f6f6"/><path d="M34,40 L43,37 L43,24 L36,31Z" fill="#d0d0d0"/></svg>
<svg style="left:62px;top:1px;overflow:hidden" width="58" height="58"><rect width="58" height="58" fill="url(#tbg)"/><path d="M19,38 Q20,50 28,51 Q38,50 45,40" stroke="url(#chk)" stroke-width="7" fill="none"/><path d="M24,26 L52,-2 L62,6 L33,35Z" fill="#3a56c4"/><path d="M22,28 L27,23 L34,30 L29,35Z" fill="#eeeeee"/></svg>
<svg style="left:122px;top:1px;overflow:hidden" width="58" height="58"><rect width="58" height="58" fill="url(#tbg)"/><path d="M7,40 Q25,48 44,44" stroke="url(#chk)" stroke-width="12" fill="none" opacity="0.85"/><path d="M36,0 Q24,6 24,22 Q23,34 28,36 Q40,36 50,30 L58,26 L58,0Z" fill="#74777b"/></svg>
<svg style="left:182px;top:1px;overflow:hidden" width="58" height="58"><rect width="58" height="58" fill="url(#tbg)"/><circle cx="11" cy="45" r="22" fill="url(#rb)"/><path d="M27,33 L36,20 L58,-2 L58,10 L42,28Z" fill="#e8e8e8" stroke="#777" stroke-width="0.8"/><path d="M36,22 L58,2" stroke="#999" stroke-width="2"/><path d="M25,33 L30,24 L36,28Z" fill="#aaa"/><path d="M40,12 L46,18 L49,15 L43,9Z" fill="#111"/><circle cx="43" cy="31" r="1.5" fill="none" stroke="#666"/></svg>
<svg style="left:2px;top:61px;overflow:hidden" width="58" height="58"><rect width="58" height="58" fill="url(#tbg)"/><path d="M22,48 Q40,45 58,38" stroke="#1e1e22" stroke-width="10" fill="none" stroke-linecap="round"/><path d="M39.0,28.9 L70.0,-2.3 L60.0,-12.0 L29.0,19.1Z" fill="#262626" stroke="#555" stroke-width="0.8"/><path d="M22.0,37.0 L39.0,28.9 L29.0,19.1Z" fill="#b8b8b8" stroke="#555" stroke-width="0.6"/><path d="M22.0,37.0 L28.0,34.2 L24.4,30.7Z" fill="#444"/></svg>
<svg style="left:62px;top:61px;overflow:hidden" width="58" height="58"><rect width="58" height="58" fill="url(#tbg)"/><path d="M17,41 Q20,50 30,50 Q45,48 58,39" stroke="url(#gk)" stroke-width="7" fill="none"/><path d="M43.1,28.8 L70.0,-2.5 L59.8,-12.1 L32.9,19.2Z" fill="#1e1e1e"/><path d="M23.0,37.0 L43.1,28.8 L32.9,19.2Z" fill="#2a2a2a"/><path d="M23.0,37.0 L30.0,34.1 L26.5,30.8Z" fill="#111"/></svg>
<svg style="left:122px;top:61px;overflow:hidden" width="58" height="58"><rect width="58" height="58" fill="url(#tbg)"/><path d="M15,44 Q22,52 30,48 Q38,44 44,46 Q52,46 58,43" stroke="url(#gk2)" stroke-width="9" fill="none" filter="url(#bl1)"/><path d="M39.0,29.9 L70.0,-2.3 L60.0,-12.0 L29.0,20.1Z" fill="#e4e4e4" stroke="#888" stroke-width="0.8"/><path d="M23.0,36.0 L39.0,29.9 L29.0,20.1Z" fill="#c4c4c4" stroke="#888" stroke-width="0.6"/><path d="M23.0,36.0 L28.6,33.9 L25.1,30.4Z" fill="#777"/><path d="M29,24 L37,31" stroke="#d07030" stroke-width="1.2"/></svg>
<svg style="left:182px;top:61px;overflow:hidden" width="58" height="58"><rect width="58" height="58" fill="url(#tbg)"/><path d="M16,45 Q24,50 32,45 Q40,41 46,47 Q52,50 58,43" stroke="#8c8c8c" stroke-width="11" fill="none" filter="url(#bl2)"/><path d="M39.0,29.9 L70.0,-2.3 L60.0,-12.0 L29.0,20.1Z" fill="#8a8a8a" stroke="#666" stroke-width="0.8"/><path d="M23.0,36.0 L39.0,29.9 L29.0,20.1Z" fill="#c8c8c8" stroke="#666" stroke-width="0.6"/><path d="M23.0,36.0 L28.6,33.9 L25.1,30.4Z" fill="#777"/></svg>
<svg style="left:2px;top:121px;overflow:hidden" width="58" height="58"><rect width="58" height="58" fill="url(#tbg)"/><rect width="58" height="58" fill="#52718e"/><rect x="3.5" y="3" width="51.5" height="52" fill="#88b9d9"/><path d="M18,38 Q18,46 24,45 Q30,42 32,48 Q36,52 55,40" stroke="#1e2a52" stroke-width="6" fill="none"/><path d="M34,22 L54,4" stroke="#9ab0c8" stroke-width="5"/><path d="M21,33 Q26,24 34,21 L37,24 Q30,32 21,33Z" fill="#1e1a3a"/></svg>
<svg style="left:62px;top:121px;overflow:hidden" width="58" height="58"><rect width="58" height="58" fill="url(#tbg)"/><path d="M19,37 Q20,48 25,46 Q30,43 34,48 Q40,54 58,39" stroke="url(#gk)" stroke-width="6" fill="none"/><path d="M48,8 L60,-4" stroke="#e8a030" stroke-width="5"/><path d="M36,20 L49,8" stroke="#e8e0f0" stroke-width="5"/><path d="M20,32 Q26,22 35,19 L38,23 Q30,31 20,32Z" fill="#6a4a3a"/></svg>
<svg style="left:122px;top:121px;overflow:hidden" width="58" height="58"><rect width="58" height="58" fill="url(#tbg)"/><path d="M14,51 Q16,42 22,43 Q28,44 33,52 Q40,50 58,38" stroke="#555" stroke-width="1.4" fill="none"/><path d="M43,12 L60,-4" stroke="#e88a1a" stroke-width="4.5"/><path d="M32,24 L44,12" stroke="#e8e0f0" stroke-width="3.5"/><path d="M24,33 Q27,27 32,24 L34,26 Q30,31 24,33Z" fill="#6a3a2a"/></svg>
<svg style="left:182px;top:121px;overflow:hidden" width="58" height="58"><rect width="58" height="58" fill="url(#tbg)"/><path d="M20,48 Q36,56 58,40" stroke="#777" stroke-width="9" fill="none" opacity="0.6" stroke-dasharray="1.2,1.3"/><circle cx="18" cy="44" r="3.5" fill="#111" filter="url(#bl1)"/><path d="M43.6,23.7 L70.7,-1.2 L59.6,-12.7 L32.4,12.3Z" fill="#3a7ccc"/><path d="M22.0,35.0 L43.6,23.7 L32.4,12.3Z" fill="#dcc090"/><path d="M22.0,35.0 L29.6,31.1 L25.6,27.0Z" fill="#333"/></svg>
<svg style="left:2px;top:181px;overflow:hidden" width="58" height="58"><rect width="58" height="58" fill="url(#tbg)"/><path d="M6,43 L22,48 L10,50 L30,46 L18,54 L40,44 L28,56 L54,46" stroke="#555" stroke-width="1" fill="none"/><path d="M42.6,26.7 L70.7,-1.2 L59.6,-12.7 L31.4,15.3Z" fill="#3a7cd0"/><path d="M21.0,36.0 L42.6,26.7 L31.4,15.3Z" fill="#e2cca0"/><path d="M21.0,36.0 L28.6,32.8 L24.6,28.7Z" fill="#333"/></svg>
<svg style="left:62px;top:181px;overflow:hidden" width="58" height="58"><rect width="58" height="58" fill="url(#tbg)"/><circle cx="15.8" cy="14.5" r="4.5" fill="none" stroke="#999" stroke-width="0.8"/><path d="M19,38 Q14,48 26,51 Q34,50 40,46 Q48,42 58,44" stroke="#999" stroke-width="1" fill="none"/><path d="M42.6,26.7 L70.7,-1.2 L59.6,-12.7 L31.4,15.3Z" fill="#3364cc"/><path d="M22.0,35.0 L42.6,26.7 L31.4,15.3Z" fill="#e2cca0"/><path d="M22.0,35.0 L29.2,32.1 L25.3,28.1Z" fill="#1a2030"/></svg>
<svg style="left:122px;top:181px;overflow:hidden" width="58" height="58"><rect width="58" height="58" fill="url(#tbg)"/><path d="M19,38 Q15,48 27,50 Q36,46 38,42 Q40,52 58,46" stroke="#111" stroke-width="1.6" fill="none"/><path d="M39.2,24.4 L70.4,-1.6 L59.9,-12.3 L28.8,13.6Z" fill="#3c3f47"/><path d="M22.0,35.0 L39.2,24.4 L28.8,13.6Z" fill="#e2cca0"/><path d="M22.0,35.0 L28.0,31.3 L24.4,27.5Z" fill="#111"/><path d="M36,13 L42,21" stroke="#c02020" stroke-width="2"/></svg>
<svg style="left:182px;top:181px;overflow:hidden" width="58" height="58"><rect width="58" height="58" fill="url(#tbg)"/><path d="M21,38 Q16,50 30,54 Q44,52 58,43" stroke="#333" stroke-width="3.5" fill="none" opacity="0.8"/><path d="M43.8,20.3 L72.1,0.4 L58.4,-14.1 L30.2,5.7Z" fill="#a89a88"/><path d="M25.0,31.0 L43.8,20.3 L30.2,5.7Z" fill="#efe0b8"/><path d="M25.0,31.0 L31.6,27.3 L26.8,22.1Z" fill="#1a2a3a"/></svg>
<svg style="left:2px;top:241px;overflow:hidden" width="58" height="58"><rect width="58" height="58" fill="url(#tbg)"/><path d="M22.7,38.5 Q15,46 21,51 Q30,55 42,45 Q52,36 55,40 Q57,46 58,48" stroke="#777" stroke-width="2" fill="none"/><path d="M33,27 L60,-2" stroke="#666" stroke-width="9"/><path d="M33,27 L60,-2" stroke="#c8c8cc" stroke-width="7"/><path d="M36,22 L42,16" stroke="#eee" stroke-width="7"/><path d="M26.5,34.7 L31,26 L35,30Z" fill="#555"/></svg>
<svg style="left:62px;top:241px;overflow:hidden" width="58" height="58"><rect width="58" height="58" fill="url(#tbg)"/><path d="M7.6,43.5 Q12,34 20.2,30.9 Q14,40 19,48 Q40,48 58,41" stroke="#555" stroke-width="3" fill="none" opacity="0.75" stroke-dasharray="1,0.8"/><path d="M18,14 A5,5 0 0 1 26,11 M23,18 A5,5 0 0 1 15,20" stroke="#666" stroke-width="2" fill="none"/><path d="M25,9 L27,12 L24,12Z M16,22 L14,19 L17,19Z" fill="#666"/><path d="M36.6,28.7 L69.1,17.5 L65.8,8.0 L33.4,19.3Z" fill="#d8b020"/><path d="M20.0,29.0 L36.6,28.7 L33.4,19.3Z" fill="#d8b888"/><path d="M20.0,29.0 L25.8,28.9 L24.7,25.6Z" fill="#111"/><path d="M40,21 L58,15" stroke="#2a3a20" stroke-width="3"/></svg>
<svg style="left:122px;top:241px;overflow:hidden" width="58" height="58"><rect width="58" height="58" fill="url(#tbg)"/><path d="M8,38 Q14,54 30,52 Q46,46 58,38" stroke="#555" stroke-width="13" fill="none" opacity="0.35" filter="url(#bl1)"/><path d="M8,38 Q14,54 30,52 Q46,46 58,38" stroke="#222" stroke-width="11" fill="none" opacity="0.7" stroke-dasharray="0.9,1.1"/><path d="M33.9,21.8 L61.8,-6.4 L56.1,-12.0 L28.1,16.2Z" fill="#2e5a34" stroke="#244a2a" stroke-width="0.8"/><path d="M24.0,27.0 L33.9,21.8 L28.1,16.2Z" fill="#e0c8a0" stroke="#244a2a" stroke-width="0.6"/><path d="M24.0,27.0 L27.5,25.2 L25.4,23.2Z" fill="#1a2040"/><path d="M39.9,28.7 L71.8,-2.5 L65.9,-8.0 L34.1,23.3Z" fill="#2a5030" stroke="#244a2a" stroke-width="0.8"/><path d="M31.0,35.0 L39.9,28.7 L34.1,23.3Z" fill="#e0c8a0" stroke="#244a2a" stroke-width="0.6"/><path d="M31.0,35.0 L34.1,32.8 L32.1,30.9Z" fill="#1a2040"/><path d="M35.8,24.9 L68.0,-4.1 L62.4,-9.8 L30.2,19.1Z" fill="#336a3a" stroke="#244a2a" stroke-width="0.8"/><path d="M26.0,31.0 L35.8,24.9 L30.2,19.1Z" fill="#e8d0a8" stroke="#244a2a" stroke-width="0.6"/><path d="M26.0,31.0 L29.4,28.9 L27.5,26.8Z" fill="#1a2040"/></svg>
<svg style="left:182px;top:241px;overflow:hidden" width="58" height="58"><rect width="58" height="58" fill="url(#tbg)"/><path d="M5,48 L9,44 L11,50 L14,42 L17,50 L20,42 L23,50 L26,44 M31,36 L36,50 L40,40 L44,53 L48,42 L52,55 M48,36 L56,50" stroke="#111" stroke-width="1.8" fill="none"/><path d="M41.7,21.1 L70.1,-1.6 L60.6,-11.9 L32.3,10.9Z" fill="#3a6ac8"/><path d="M20.0,35.0 L41.7,21.1 L32.3,10.9Z" fill="#c8c8c8"/><path d="M20.0,35.0 L27.6,30.2 L24.3,26.5Z" fill="#888"/></svg>
<svg style="left:2px;top:301px;overflow:hidden" width="58" height="58"><rect width="58" height="58" fill="url(#tbg)"/><path d="M44,10 L60,-4" stroke="#1a1f3a" stroke-width="8"/></svg>
<svg style="left:62px;top:301px;overflow:hidden" width="58" height="58"><rect width="58" height="58" fill="url(#tbg)"/><path d="M44,10 L60,-4" stroke="#8a9aa0" stroke-width="8"/></svg>
<svg style="left:122px;top:301px;overflow:hidden" width="58" height="58"><rect width="58" height="58" fill="url(#tbg)"/><path d="M40,10 L60,-4" stroke="#e8c820" stroke-width="8"/></svg>
<svg style="left:182px;top:301px;overflow:hidden" width="58" height="58"><rect width="58" height="58" fill="url(#tbg)"/><path d="M42,10 L60,-4" stroke="#1a1a1a" stroke-width="8"/></svg>
</div>
<div class="a" style="left:1904px;top:665px;width:14px;height:308px;background:#3c3c3c"></div>
<div class="a" style="left:1905px;top:665px;width:13px;height:12px;border:1px solid #333;background:#444"></div>
<div class="a" style="left:1905px;top:679px;width:13px;height:40px;border:1px solid #555;background:#474747;border-radius:2px"></div>
<div class="a" style="left:1905px;top:959px;width:13px;height:13px;border:1px solid #333;background:#444"></div>
<svg style="left:0;top:0" width="1920" height="1027"><path d="M1907.5,674 L1915.5,674 L1911.5,670Z M1907.5,963 L1915.5,963 L1911.5,967Z" fill="#9a9a9a"/></svg>
<div class="a" style="left:1660px;top:975px;width:167px;height:20px;background:#383838;border-radius:3px"></div>
<div class="a" style="left:1834px;top:978px;width:13px;height:14px;background:#3a3a3a"></div>
<svg style="left:0;top:0" width="1920" height="1027"><path d="M1837.5,984.5 L1840.3,989 L1844.5,979.5" stroke="#c4c4c4" stroke-width="1.2" fill="none"/></svg>
<svg style="left:0;top:0" width="1920" height="1027" font-family="Liberation Sans"><text style="white-space:pre" x="9.5" y="14" font-size="12.6" fill="#dedede" font-weight="normal" textLength="19.0" lengthAdjust="spacingAndGlyphs">File</text><text style="white-space:pre" x="41.5" y="14" font-size="12.6" fill="#dedede" font-weight="normal" textLength="21.0" lengthAdjust="spacingAndGlyphs">Edit</text><text style="white-space:pre" x="75.2" y="14" font-size="12.6" fill="#dedede" font-weight="normal" textLength="26.5" lengthAdjust="spacingAndGlyphs">View</text><text style="white-space:pre" x="114.5" y="14" font-size="12.6" fill="#dedede" font-weight="normal" textLength="34.0" lengthAdjust="spacingAndGlyphs">Image</text><text style="white-space:pre" x="161.5" y="14" font-size="12.6" fill="#dedede" font-weight="normal" textLength="29.0" lengthAdjust="spacingAndGlyphs">Layer</text><text style="white-space:pre" x="203.2" y="14" font-size="12.6" fill="#dedede" font-weight="normal" textLength="32.2" lengthAdjust="spacingAndGlyphs">Select</text><text style="white-space:pre" x="248.8" y="14" font-size="12.6" fill="#dedede" font-weight="normal" textLength="26.8" lengthAdjust="spacingAndGlyphs">Filter</text><text style="white-space:pre" x="287.5" y="14" font-size="12.6" fill="#dedede" font-weight="normal" textLength="29.2" lengthAdjust="spacingAndGlyphs">Tools</text><text style="white-space:pre" x="329.5" y="14" font-size="12.6" fill="#dedede" font-weight="normal" textLength="43.0" lengthAdjust="spacingAndGlyphs">Settings</text><text style="white-space:pre" x="385.2" y="14" font-size="12.6" fill="#dedede" font-weight="normal" textLength="45.2" lengthAdjust="spacingAndGlyphs">Window</text><text style="white-space:pre" x="443.2" y="14" font-size="12.6" fill="#dedede" font-weight="normal" textLength="26.0" lengthAdjust="spacingAndGlyphs">Help</text><text style="white-space:pre" x="286.8" y="43" font-size="12.8" fill="#e0e0e0" font-weight="normal" textLength="40.6" lengthAdjust="spacingAndGlyphs">Normal</text><text style="white-space:pre" x="662.2" y="43" font-size="12.8" fill="#f0f0f0" font-weight="normal" textLength="75.6" lengthAdjust="spacingAndGlyphs">Opacity: 100%</text><text style="white-space:pre" x="844.0" y="43" font-size="12.8" fill="#f0f0f0" font-weight="normal" textLength="68.5" lengthAdjust="spacingAndGlyphs">Size: 40.00 px</text><text style="white-space:pre" x="786.1" y="77" font-size="12.4" fill="#dcdcdc" font-weight="normal" textLength="129.3" lengthAdjust="spacingAndGlyphs">[Not Saved]  (18.4 MiB) *</text><text style="white-space:pre" x="1669.5" y="74.2" font-size="11.6" fill="#dcdcdc" font-weight="normal" textLength="126.0" lengthAdjust="spacingAndGlyphs">Advanced Color Selector</text><text style="white-space:pre" x="1818.3" y="73.1" font-size="11.6" fill="#dcdcdc" font-weight="normal" textLength="67.2" lengthAdjust="spacingAndGlyphs">Tool Options</text><text style="white-space:pre" x="1681.5" y="93" font-size="11.6" fill="#dcdcdc" font-weight="normal" textLength="67.6" lengthAdjust="spacingAndGlyphs">Tool Options</text><text style="white-space:pre" x="1662.0" y="122" font-size="11.6" fill="#dcdcdc" font-weight="normal" textLength="91.5" lengthAdjust="spacingAndGlyphs">Brush Smoothing:</text><text style="white-space:pre" x="1790.5" y="122" font-size="11.6" fill="#dcdcdc" font-weight="normal" textLength="48.2" lengthAdjust="spacingAndGlyphs">Stabilizer</text><text style="white-space:pre" x="1662.0" y="149" font-size="11.6" fill="#dcdcdc" font-weight="normal" textLength="72.8" lengthAdjust="spacingAndGlyphs">Sample count:</text><text style="white-space:pre" x="1838.3" y="149" font-size="11.6" fill="#eeeeee" font-weight="normal" textLength="12.2" lengthAdjust="spacingAndGlyphs">10</text><text style="white-space:pre" x="1662.0" y="177.1" font-size="11.6" fill="#dcdcdc" font-weight="normal" textLength="31.0" lengthAdjust="spacingAndGlyphs">Delay:</text><text style="white-space:pre" x="1829.7" y="177" font-size="11.6" fill="#7c7c7c" font-weight="normal" textLength="27.6" lengthAdjust="spacingAndGlyphs">50 px</text><text style="white-space:pre" x="1662.0" y="203.8" font-size="11.6" fill="#dcdcdc" font-weight="normal" textLength="55.5" lengthAdjust="spacingAndGlyphs">Finish line:</text><text style="white-space:pre" x="1662.0" y="230.1" font-size="11.6" fill="#dcdcdc" font-weight="normal" textLength="88.8" lengthAdjust="spacingAndGlyphs">Stabilize Sensors:</text><text style="white-space:pre" x="1680.6" y="262.9" font-size="11.6" fill="#dcdcdc" font-weight="normal" textLength="94.4" lengthAdjust="spacingAndGlyphs">Snap to Assistants</text><text style="white-space:pre" x="1681.7" y="302.3" font-size="11.6" fill="#dcdcdc" font-weight="normal" textLength="31.3" lengthAdjust="spacingAndGlyphs">Layers</text><text style="white-space:pre" x="1664.0" y="328.2" font-size="11.6" fill="#dcdcdc" font-weight="normal" textLength="37.4" lengthAdjust="spacingAndGlyphs">Normal</text><text style="white-space:pre" x="1728.0" y="360.9" font-size="11.6" fill="#e8e8e8" font-weight="normal" textLength="75.5" lengthAdjust="spacingAndGlyphs">Opacity:  100%</text><text style="white-space:pre" x="1747.9" y="391.6" font-size="11.6" fill="#e6e6e6" font-weight="normal" textLength="67.2" lengthAdjust="spacingAndGlyphs">Paint Layer 1</text><text style="white-space:pre" x="1748.7" y="418.9" font-size="11.6" fill="#e6e6e6" font-weight="normal" textLength="62.2" lengthAdjust="spacingAndGlyphs">Background</text><text style="white-space:pre" x="1682.1" y="635.3" font-size="11.6" fill="#dcdcdc" font-weight="normal" textLength="68.0" lengthAdjust="spacingAndGlyphs">Brush Presets</text><text style="white-space:pre" x="1663.4" y="657.2" font-size="11.6" fill="#dcdcdc" font-weight="normal" textLength="13.6" lengthAdjust="spacingAndGlyphs">All</text><text style="white-space:pre" x="1839.2" y="657.2" font-size="11.6" fill="#dcdcdc" font-weight="normal" textLength="18.7" lengthAdjust="spacingAndGlyphs">Tag</text><text style="white-space:pre" x="1661.7" y="990.3" font-size="11.6" fill="#8a8a8a" font-weight="normal" textLength="34.0" lengthAdjust="spacingAndGlyphs">Search</text><text style="white-space:pre" x="1852.4" y="989.3" font-size="11.6" fill="#dcdcdc" font-weight="normal" textLength="60.8" lengthAdjust="spacingAndGlyphs">Filter in Tag</text><text style="white-space:pre" x="36.8" y="1016.9" font-size="12.3" fill="#dcdcdc" font-weight="normal" textLength="75.7" lengthAdjust="spacingAndGlyphs">b) Basic-5 Size</text><text style="white-space:pre" x="495.8" y="1017.5" font-size="12.3" fill="#dcdcdc" font-weight="normal" textLength="315.2" lengthAdjust="spacingAndGlyphs">RGB/Alpha (8-bit integer/channel)  sRGB-elle-V2-srgbtrc.icc</text><text style="white-space:pre" x="1466.7" y="1017.4" font-size="12.3" fill="#dcdcdc" font-weight="normal" textLength="122.0" lengthAdjust="spacingAndGlyphs">1,920 x 1,080 (18.4 MiB)</text><text style="white-space:pre" x="1629.2" y="1017.4" font-size="12.3" fill="#dcdcdc" font-weight="normal" textLength="25.9" lengthAdjust="spacingAndGlyphs">0.00°</text><text style="white-space:pre" x="1763.8" y="1017.4" font-size="12.3" fill="#dcdcdc" font-weight="normal" textLength="32.1" lengthAdjust="spacingAndGlyphs">66.7%</text><rect x="10" y="15" width="5.5" height="1" fill="#dedede"/><rect x="42" y="15" width="5.5" height="1" fill="#dedede"/><rect x="76" y="15" width="6.5" height="1" fill="#dedede"/><rect x="115" y="15" width="2.5" height="1" fill="#dedede"/><rect x="162" y="15" width="6" height="1" fill="#dedede"/><rect x="204" y="15" width="6.5" height="1" fill="#dedede"/><rect x="271" y="15" width="4" height="1" fill="#dedede"/><rect x="288" y="15" width="6" height="1" fill="#dedede"/><rect x="353" y="15" width="6" height="1" fill="#dedede"/><rect x="385.6" y="15" width="11.399999999999977" height="1" fill="#dedede"/><rect x="444.4" y="15" width="8.100000000000023" height="1" fill="#dedede"/><rect x="1496" y="1019" width="6" height="1" fill="#dcdcdc"/></svg>
</body></html>
